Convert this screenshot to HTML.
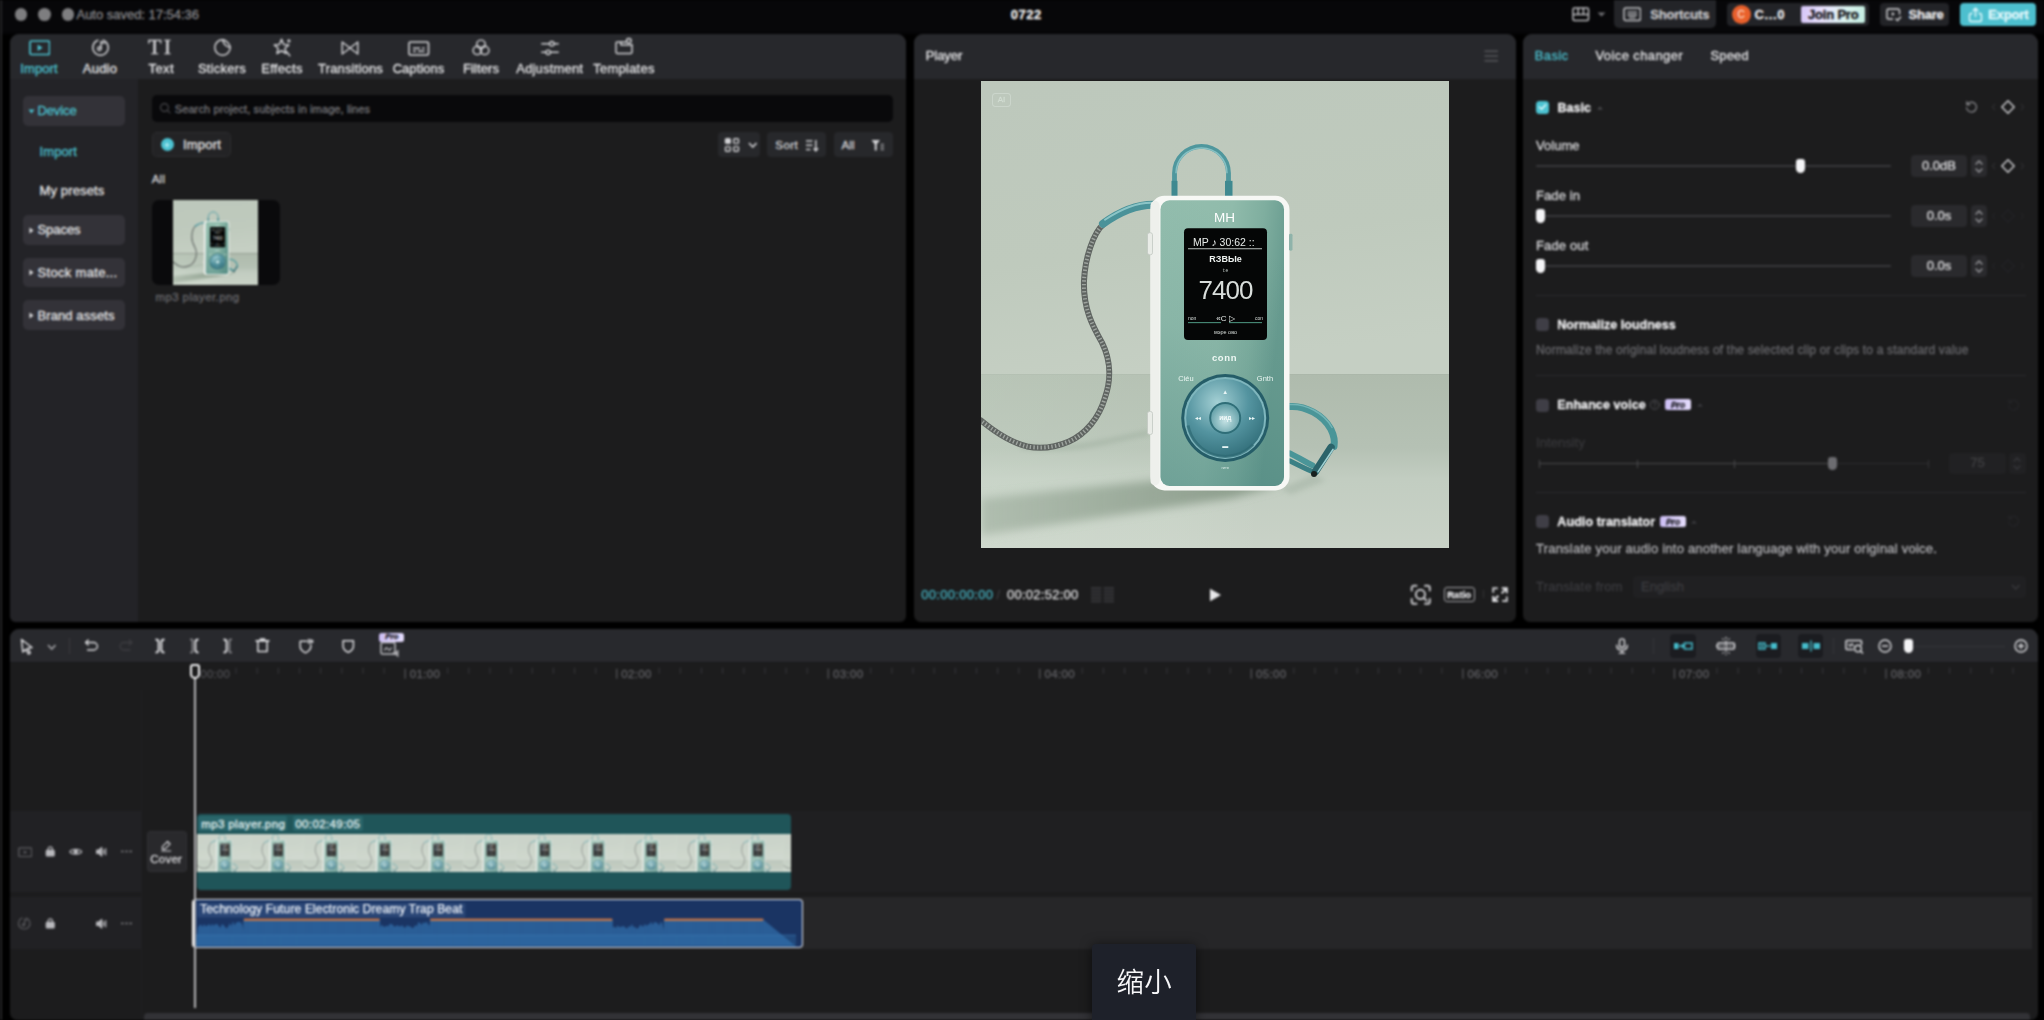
<!DOCTYPE html>
<html><head><meta charset="utf-8"><title>0722</title>
<style>
html,body{margin:0;padding:0;background:#000;}
body{width:2044px;height:1020px;position:relative;overflow:hidden;font-family:"Liberation Sans", sans-serif;}
.t{position:absolute;white-space:nowrap;-webkit-text-stroke-width:0.3px;}
</style></head><body><div id="app" style="position:absolute;left:0;top:0;width:2044px;height:1020px;overflow:hidden;filter:blur(0.8px)">

<svg width="0" height="0" style="position:absolute">
<defs>
<linearGradient id="gWall" x1="0.1" y1="0" x2="0.3" y2="1">
<stop offset="0" stop-color="#bdc8bc"/><stop offset=".6" stop-color="#bfcabd"/><stop offset="1" stop-color="#c5cfc3"/></linearGradient>
<linearGradient id="gFloor" x1="0" y1="0" x2="0" y2="1">
<stop offset="0" stop-color="#afbbad"/><stop offset=".42" stop-color="#b5c1b4"/><stop offset=".6" stop-color="#c2cdc1"/><stop offset="1" stop-color="#c9d2c7"/></linearGradient>
<linearGradient id="gFloorL" x1="0" y1="0" x2="1" y2="0"><stop offset="0" stop-color="#f0fff0" stop-opacity=".15"/><stop offset=".4" stop-color="#f0fff0" stop-opacity=".1"/><stop offset=".6" stop-color="#f0fff0" stop-opacity="0"/></linearGradient>
<linearGradient id="gFace" x1="0" y1="0" x2="1" y2="0.25">
<stop offset="0" stop-color="#94beae"/><stop offset=".55" stop-color="#90bbab"/><stop offset=".8" stop-color="#7fae9f"/><stop offset="1" stop-color="#699c90"/></linearGradient>
<radialGradient id="gWheel" cx=".4" cy=".3" r=".8">
<stop offset="0" stop-color="#a4d0d4"/><stop offset=".5" stop-color="#5494a0"/><stop offset="1" stop-color="#2c6873"/></radialGradient>
<radialGradient id="gBtn" cx=".5" cy=".6" r=".7">
<stop offset="0" stop-color="#c4e2e4"/><stop offset="1" stop-color="#4f929b"/></radialGradient>
<linearGradient id="gShadow" x1="1" y1="0" x2="0" y2="0">
<stop offset="0" stop-color="#7f917f" stop-opacity=".9"/><stop offset="1" stop-color="#93a493" stop-opacity=".5"/></linearGradient>
<filter id="fBlur" x="-10%" y="-30%" width="120%" height="160%"><feGaussianBlur stdDeviation="5"/></filter><filter id="fBlur2" x="-10%" y="-50%" width="120%" height="200%"><feGaussianBlur stdDeviation="2.5"/></filter>
<linearGradient id="gFaceV" x1="0.3" y1="0" x2="0" y2="1"><stop offset="0" stop-color="#2f7070" stop-opacity="0"/><stop offset=".45" stop-color="#2f7070" stop-opacity=".1"/><stop offset="1" stop-color="#2f7070" stop-opacity=".36"/></linearGradient>
<symbol id="mp3" viewBox="0 0 468 468">
<rect width="468" height="294" fill="url(#gWall)"/>
<rect y="293.5" width="468" height="175" fill="url(#gFloor)"/><rect y="293.5" width="468" height="175" fill="url(#gFloorL)"/>
<polygon points="172,400 300,404 250,418 0,455 0,418" fill="url(#gShadow)" filter="url(#fBlur)"/>
<path d="M40,366 C90,372 120,362 168,352" fill="none" stroke="#97a898" stroke-width="5" opacity=".45" filter="url(#fBlur2)"/><polygon points="300,408 332,394 345,400 310,414" fill="#93a494" opacity=".35" filter="url(#fBlur2)"/>
<!-- cable -->
<path id="cab" d="M123,143 C112,152 104,178 103,200 C102,228 112,246 121,262 C130,280 130,300 124,317 C118,338 104,354 88,361 C72,368 56,368 46,366 C30,362 12,350 0,340" fill="none" stroke="#5f6461" stroke-width="6" stroke-linecap="round"/>
<path d="M123,143 C112,152 104,178 103,200 C102,228 112,246 121,262 C130,280 130,300 124,317 C118,338 104,354 88,361 C72,368 56,368 46,366 C30,362 12,350 0,340" fill="none" stroke="#9da39e" stroke-width="4" stroke-dasharray="1.4 2.2"/>
<path d="M172,124 C158,124 140,130 122,143" fill="none" stroke="#4a9299" stroke-width="8" stroke-linecap="round"/>
<path d="M170,122 C158,122 142,127 124,139" fill="none" stroke="#8cc5c7" stroke-width="2" stroke-linecap="round"/>
<!-- top loop -->
<path d="M193.5,116 L193.5,92.5 A27,27 0 0 1 247.5,92.5 L247.5,116" fill="none" stroke="#4f979d" stroke-width="4.8"/>
<path d="M195,92.5 A25.5,25.5 0 0 1 246,92.5" fill="none" stroke="#86c0c3" stroke-width="1.5"/>
<rect x="244" y="100" width="7.5" height="16" fill="#3f8990"/>
<rect x="190.5" y="100" width="6" height="16" fill="#3f8990"/>
<!-- right strap -->
<path d="M309,326 C324,325 342,334 350,349 C353,355 354,360 353,366" fill="none" stroke="#4a9598" stroke-width="7" stroke-linecap="round"/>
<path d="M309,324 C324,323 343,332 351,347" fill="none" stroke="#7dbcbd" stroke-width="1.500" stroke-linecap="round" opacity=".8"/>
<path d="M309,380.500 C316,384 324,388 331,391" fill="none" stroke="#3b8085" stroke-width="5" stroke-linecap="round"/>
<path d="M309,373 C316,376.500 324,381 331.500,385" fill="none" stroke="#4a9598" stroke-width="6" stroke-linecap="round"/>
<path d="M350,367 L334.500,391" fill="none" stroke="#2b636a" stroke-width="7.500" stroke-linecap="round"/>
<path d="M352,369 L337,391.500" fill="none" stroke="#9fd0d2" stroke-width="1.600" stroke-linecap="round"/>
<circle cx="333" cy="393.500" r="3" fill="#18201f"/>
<!-- body -->
<rect x="169.5" y="115" width="139" height="295" rx="14" fill="#f7f8f5"/>
<rect x="169.5" y="120" width="9" height="285" rx="4.500" fill="#eef0ec"/>
<rect x="166.5" y="152" width="5" height="22" rx="2" fill="#e9ece7" stroke="#c2c8c1" stroke-width=".8"/>
<rect x="166.5" y="331" width="5" height="23" rx="2" fill="#e9ece7" stroke="#c2c8c1" stroke-width=".8"/>
<rect x="308" y="153" width="3.500" height="17" rx="1.500" fill="#8fb3aa"/>
<rect x="179.5" y="119.500" width="123.500" height="286" rx="9" fill="url(#gFace)"/><rect x="179.5" y="119.500" width="123.500" height="286" rx="9" fill="url(#gFaceV)"/>
<text x="243.500" y="141" font-family="Liberation Sans, sans-serif" font-size="13.500" fill="#ffffff" text-anchor="middle">MH</text>
<!-- screen -->
<rect x="203" y="147.500" width="83" height="112" rx="4" fill="#050606"/>
<text x="212" y="165" font-family="Liberation Sans, sans-serif" font-size="10.500" fill="#e8ecea">MP ♪ 30:62 ::</text>
<rect x="207" y="167.500" width="74" height="1" fill="#b9c0bd"/>
<text x="244.500" y="181" font-family="Liberation Sans, sans-serif" font-size="9" font-weight="bold" fill="#eef2f0" text-anchor="middle">RЗBЫe</text>
<text x="244.500" y="191" font-family="Liberation Sans, sans-serif" font-size="5" fill="#b9c0bd" text-anchor="middle">t:e</text>
<text x="244.500" y="218" font-family="Liberation Sans, sans-serif" font-size="26" fill="#d9dedb" text-anchor="middle" letter-spacing="-1">7400</text>
<text x="207" y="239" font-family="Liberation Sans, sans-serif" font-size="5" fill="#d8dedb">non</text>
<text x="244.500" y="240" font-family="Liberation Sans, sans-serif" font-size="8" fill="#e8ecea" text-anchor="middle">«C ▷</text>
<text x="282" y="239" font-family="Liberation Sans, sans-serif" font-size="5" fill="#d8dedb" text-anchor="end">con</text>
<rect x="207" y="241.500" width="33" height="1" fill="#4f9a84"/><rect x="248" y="241.500" width="33" height="1" fill="#4f9a84"/>
<text x="244.500" y="253" font-family="Liberation Sans, sans-serif" font-size="5.500" fill="#d8dedb" text-anchor="middle">мэре  ово</text>
<text x="243.500" y="280" font-family="Liberation Sans, sans-serif" font-size="9.500" font-weight="bold" fill="#eef8f4" text-anchor="middle" letter-spacing=".6">conn</text>
<text x="205" y="300" font-family="Liberation Sans, sans-serif" font-size="7.500" fill="#eaf6f2" text-anchor="middle">Ciéu</text>
<text x="284" y="300" font-family="Liberation Sans, sans-serif" font-size="7.500" fill="#eaf6f2" text-anchor="middle">Gnth</text>
<!-- wheel -->
<circle cx="244.200" cy="337.500" r="44" fill="#255d68"/>
<circle cx="244.200" cy="337.500" r="41" fill="#7fb6bd"/>
<circle cx="244.200" cy="337.500" r="39" fill="url(#gWheel)"/>
<path d="M207,345 A38,38 0 0 0 272,364" fill="none" stroke="#2d6a74" stroke-width="3" opacity=".7"/>
<circle cx="244.200" cy="337.500" r="16" fill="#2f6e78"/>
<circle cx="244.200" cy="337.500" r="14" fill="url(#gBtn)"/>
<text x="244.200" y="340" font-family="Liberation Sans, sans-serif" font-size="6.500" font-weight="bold" fill="#f4fbfb" text-anchor="middle">иид</text>
<text x="244.200" y="313" font-family="Liberation Sans, sans-serif" font-size="6" fill="#e6f4f4" text-anchor="middle">▲</text>
<text x="244.200" y="368" font-family="Liberation Sans, sans-serif" font-size="6" fill="#e6f4f4" text-anchor="middle">▬</text>
<text x="217" y="340" font-family="Liberation Sans, sans-serif" font-size="6" fill="#e6f4f4" text-anchor="middle">◂◂</text>
<text x="271.500" y="340" font-family="Liberation Sans, sans-serif" font-size="6" fill="#e6f4f4" text-anchor="middle">▸▸</text>
<text x="244.200" y="388.500" font-family="Liberation Sans, sans-serif" font-size="4" fill="#d3e6e1" text-anchor="middle">rитв</text>
</symbol>
</defs>
</svg>
<div style="position:absolute;left:0px;top:0px;width:2044px;height:36px;background:linear-gradient(#070709 88%,#000);border-radius:0px;"></div>
<div style="position:absolute;left:0px;top:0px;width:2.2px;height:1020px;background:#262628;border-radius:0px;"></div>
<div style="position:absolute;left:14.6px;top:8.299999999999999px;width:12.8px;height:12.8px;border-radius:50%;background:#7e7e80"></div>
<div style="position:absolute;left:38.300000000000004px;top:8.299999999999999px;width:12.8px;height:12.8px;border-radius:50%;background:#7e7e80"></div>
<div style="position:absolute;left:61.6px;top:8.299999999999999px;width:12.8px;height:12.8px;border-radius:50%;background:#7e7e80"></div>
<span id="t1" class="t" style="left:76.5px;top:6.50px;font-size:13px;line-height:16px;color:#8a8a8d;font-weight:400;letter-spacing:-0.019px;">Auto saved: 17:54:36</span>
<span id="t2" class="t" style="left:1026.3px;transform:translateX(-50%);top:6.50px;font-size:13px;line-height:16px;color:#f2f2f2;font-weight:700;letter-spacing:0.520px;">0722</span>
<svg style="position:absolute;left:1572px;top:6.5px;" width="18" height="15" viewBox="0 0 18 15"><rect x="1" y="1" width="15.500" height="12.500" rx="1.5" fill="none" stroke="#bdbdc0" stroke-width="1.5"/><path d="M1 7.500H16.500M6.200 1V7.500M11.400 1V7.500" stroke="#bdbdc0" stroke-width="1.5" fill="none"/></svg>
<svg style="position:absolute;left:1596.5px;top:12px;" width="9" height="5" viewBox="0 0 9 5"><path d="M0.500 0.500L4.500 4.500L8.500 0.500Z" fill="#6e6e72"/></svg>
<div style="position:absolute;left:1614px;top:-4px;width:102px;height:32px;background:#232428;border-radius:5px;"></div>
<svg style="position:absolute;left:1622.5px;top:7px;" width="18.5" height="14.5" viewBox="0 0 18.5 14.5"><rect x="1" y="1" width="16.500" height="12.500" rx="2" fill="none" stroke="#c2c2c5" stroke-width="1.5"/><path d="M4.500 5.200H14M4.500 8H14M6 10.700H12.500" stroke="#c2c2c5" stroke-width="1.3" fill="none"/></svg>
<span id="t3" class="t" style="left:1650.2px;top:6.50px;font-size:13px;line-height:16px;color:#c6c6c9;font-weight:700;letter-spacing:-0.186px;">Shortcuts</span>
<div style="position:absolute;left:1727px;top:3px;width:142px;height:22.5px;background:#222327;border-radius:4px;"></div>
<div style="position:absolute;left:1731.500px;top:5px;width:19px;height:19px;border-radius:50%;background:#e9602b"></div>
<span id="t4" class="t" style="left:1741px;transform:translateX(-50%);top:8.50px;font-size:10px;line-height:12px;color:#ffd9c8;font-weight:400;">C</span>
<span id="t5" class="t" style="left:1754.5px;top:6.50px;font-size:13px;line-height:16px;color:#ececee;font-weight:700;letter-spacing:0.606px;">C...0</span>
<div style="position:absolute;left:1801px;top:6px;width:64px;height:17px;background:linear-gradient(100deg,#d4c3f6 0%,#e9e2fd 35%,#d9f3ee 70%,#c3ecdf 100%);border-radius:2px;"></div>
<span id="t6" class="t" style="left:1808px;top:6.50px;font-size:13px;line-height:16px;color:#101014;font-weight:700;letter-spacing:-0.189px;">Join Pro</span>
<div style="position:absolute;left:1880px;top:3px;width:69px;height:22.5px;background:#222327;border-radius:4px;"></div>
<svg style="position:absolute;left:1886px;top:7.5px;" width="16" height="14" viewBox="0 0 16 14"><path d="M13.500 6.500V2.500A1.500 1.500 0 0 0 12 1H2.500A1.500 1.500 0 0 0 1 2.500V9.500A1.500 1.500 0 0 0 2.500 11H7" fill="none" stroke="#d8d8da" stroke-width="1.4"/><path d="M5.800 4L8.800 6L5.800 8Z" fill="#d8d8da"/><path d="M9.500 10.500L11.500 12.500L15 8.800" fill="none" stroke="#d8d8da" stroke-width="1.4"/></svg>
<span id="t7" class="t" style="left:1908.5px;top:6.50px;font-size:13px;line-height:16px;color:#ececee;font-weight:700;letter-spacing:-0.228px;">Share</span>
<div style="position:absolute;left:1960px;top:3px;width:75.5px;height:23px;background:#4dbfce;border-radius:4px;"></div>
<svg style="position:absolute;left:1967.5px;top:6.5px;" width="15" height="16" viewBox="0 0 15 16"><path d="M4.500 6.500H3A1.500 1.500 0 0 0 1.500 8V13A1.500 1.500 0 0 0 3 14.500H12A1.500 1.500 0 0 0 13.500 13V8A1.500 1.500 0 0 0 12 6.500H10.500" fill="none" stroke="#e9fbff" stroke-width="1.4"/><path d="M7.500 10V1.500M4.800 4L7.500 1.300L10.200 4" fill="none" stroke="#e9fbff" stroke-width="1.4"/></svg>
<span id="t8" class="t" style="left:1988px;top:6.50px;font-size:13px;line-height:16px;color:#e4f9fd;font-weight:700;letter-spacing:-0.112px;">Export</span>
<div style="position:absolute;left:10px;top:33.500px;width:896px;height:588.800px;border-radius:9px 9px 6px 6px;overflow:hidden;background:#1c1c1d"><div style="position:absolute;left:0;top:0;width:896px;height:45.200px;background:#27282c"></div><div style="position:absolute;left:0;top:45.200px;width:127.500px;height:545px;background:#232327"></div></div>
<svg style="position:absolute;left:28.5px;top:40px;" width="21.5" height="15.5" viewBox="0 0 21.5 15.5"><rect x="1" y="1" width="19.500" height="13.500" rx="1.5" fill="none" stroke="#4cc2d1" stroke-width="1.7"/><path d="M8.600 4.600L13.600 7.750L8.600 10.900Z" fill="#4cc2d1"/></svg>
<svg style="position:absolute;left:89.50px;top:37.10px;" width="21" height="21" viewBox="0 0 24 24" fill="none" stroke="#d2d2d5" stroke-width="1.7" stroke-linecap="round" stroke-linejoin="round"><path d="M9 3.700A8.800 8.800 0 1 0 15 3.700" /><path d="M12.600 13.200V5.200L16.300 7.200"/><circle cx="10.700" cy="13.400" r="1.900"/></svg>
<span id="t9" class="t" style="left:160.7px;transform:translateX(-50%);top:34.30px;font-size:22px;line-height:26px;color:#d2d2d5;font-weight:400;letter-spacing:2.367px;font-family:'Liberation Serif', serif;-webkit-text-stroke:0.4px #d2d2d5;">TI</span>
<svg style="position:absolute;left:211.50px;top:37.10px;" width="21" height="21" viewBox="0 0 24 24" fill="none" stroke="#d2d2d5" stroke-width="1.7" stroke-linecap="round" stroke-linejoin="round"><path d="M12.500 3.200A8.800 8.800 0 1 0 20.800 11.500C16.500 11.500 12.500 8 12.500 3.200Z"/><path d="M12.500 3.200C15.500 3.500 20.300 7.600 20.800 11.500"/></svg>
<svg style="position:absolute;left:271.00px;top:36.60px;" width="22" height="22" viewBox="0 0 24 24" fill="none" stroke="#d2d2d5" stroke-width="1.6" stroke-linecap="round" stroke-linejoin="round"><path d="M11.500 2.500L13.800 8.200L19.500 8.600L15.200 12.300L16.500 18L11.500 15L6.500 18L7.800 12.300L3.500 8.600L9.200 8.200Z"/><path d="M17.200 16.200L20.500 20.500M19.500 3V5.500M18.250 4.250H20.750"/></svg>
<svg style="position:absolute;left:339.00px;top:36.60px;" width="22" height="22" viewBox="0 0 24 24" fill="none" stroke="#d2d2d5" stroke-width="1.6" stroke-linecap="round" stroke-linejoin="round"><path d="M3.500 5.500L12 12L3.500 18.500Z"/><path d="M20.500 5.500L12 12L20.500 18.500Z"/></svg>
<svg style="position:absolute;left:408px;top:40.5px;" width="21.5" height="15" viewBox="0 0 21.5 15"><rect x="1" y="1" width="19.500" height="13" rx="1.5" fill="none" stroke="#d2d2d5" stroke-width="1.6"/><path d="M5 7.300H12M14 7.300H16.500M5 10.300H8M10 10.300H16.500" stroke="#d2d2d5" stroke-width="1.4" fill="none"/></svg>
<svg style="position:absolute;left:470.00px;top:36.60px;" width="22" height="22" viewBox="0 0 24 24" fill="none" stroke="#d2d2d5" stroke-width="1.6" stroke-linecap="round" stroke-linejoin="round"><circle cx="12" cy="8" r="4.600"/><circle cx="8" cy="14.600" r="4.600"/><circle cx="16" cy="14.600" r="4.600"/></svg>
<svg style="position:absolute;left:538.50px;top:36.60px;" width="22" height="22" viewBox="0 0 24 24" fill="none" stroke="#d2d2d5" stroke-width="1.5" stroke-linecap="round" stroke-linejoin="round"><path d="M3 7.300H11.500M16.500 7.300H21M3 16.700H7.500M12.500 16.700H21"/><circle cx="14" cy="7.300" r="2.400"/><circle cx="10" cy="16.700" r="2.400"/></svg>
<svg style="position:absolute;left:613.00px;top:36.20px;" width="22" height="22" viewBox="0 0 24 24" fill="none" stroke="#d2d2d5" stroke-width="1.6" stroke-linecap="round" stroke-linejoin="round"><path d="M14 6.500H4.500A1.200 1.200 0 0 0 3.300 7.700V17.800A1.200 1.200 0 0 0 4.500 19H19.500A1.200 1.200 0 0 0 20.700 17.800V9.500"/><path d="M8.500 6.500V9.800H20.700"/><circle cx="17.300" cy="5.200" r="2.500"/></svg>
<span id="t10" class="t" style="left:39px;transform:translateX(-50%);top:60.60px;font-size:13px;line-height:16px;color:#4cc2d1;font-weight:400;letter-spacing:0.143px;-webkit-text-stroke:0.3px #4cc2d1;">Import</span>
<span id="t11" class="t" style="left:100px;transform:translateX(-50%);top:60.60px;font-size:13px;line-height:16px;color:#e6e6e8;font-weight:400;letter-spacing:0.210px;-webkit-text-stroke:0.3px #e6e6e8;">Audio</span>
<span id="t12" class="t" style="left:161.3px;transform:translateX(-50%);top:60.60px;font-size:13px;line-height:16px;color:#e6e6e8;font-weight:400;letter-spacing:0.464px;-webkit-text-stroke:0.3px #e6e6e8;">Text</span>
<span id="t13" class="t" style="left:222px;transform:translateX(-50%);top:60.60px;font-size:13px;line-height:16px;color:#e6e6e8;font-weight:400;letter-spacing:0.246px;-webkit-text-stroke:0.3px #e6e6e8;">Stickers</span>
<span id="t14" class="t" style="left:282px;transform:translateX(-50%);top:60.60px;font-size:13px;line-height:16px;color:#e6e6e8;font-weight:400;letter-spacing:0.298px;-webkit-text-stroke:0.3px #e6e6e8;">Effects</span>
<span id="t15" class="t" style="left:350.5px;transform:translateX(-50%);top:60.60px;font-size:13px;line-height:16px;color:#e6e6e8;font-weight:400;letter-spacing:0.172px;-webkit-text-stroke:0.3px #e6e6e8;">Transitions</span>
<span id="t16" class="t" style="left:418.5px;transform:translateX(-50%);top:60.60px;font-size:13px;line-height:16px;color:#e6e6e8;font-weight:400;letter-spacing:0.048px;-webkit-text-stroke:0.3px #e6e6e8;">Captions</span>
<span id="t17" class="t" style="left:481px;transform:translateX(-50%);top:60.60px;font-size:13px;line-height:16px;color:#e6e6e8;font-weight:400;letter-spacing:0.087px;-webkit-text-stroke:0.3px #e6e6e8;">Filters</span>
<span id="t18" class="t" style="left:549.7px;transform:translateX(-50%);top:60.60px;font-size:13px;line-height:16px;color:#e6e6e8;font-weight:400;letter-spacing:0.175px;-webkit-text-stroke:0.3px #e6e6e8;">Adjustment</span>
<span id="t19" class="t" style="left:624px;transform:translateX(-50%);top:60.60px;font-size:13px;line-height:16px;color:#e6e6e8;font-weight:400;letter-spacing:0.228px;-webkit-text-stroke:0.3px #e6e6e8;">Templates</span>
<div style="position:absolute;left:22.5px;top:96px;width:102.5px;height:29.5px;background:#333238;border-radius:5px;"></div>
<svg style="position:absolute;left:27.5px;top:108.5px;" width="7" height="5" viewBox="0 0 7 5"><path d="M0.500 0.500H6.500L3.500 4.500Z" fill="#4cc2d1"/></svg>
<span id="t20" class="t" style="left:37.5px;top:103.40px;font-size:13px;line-height:16px;color:#4cc2d1;font-weight:400;letter-spacing:-0.125px;-webkit-text-stroke:0.3px #4cc2d1;">Device</span>
<span id="t21" class="t" style="left:39.5px;top:143.70px;font-size:13px;line-height:16px;color:#4cc2d1;font-weight:400;letter-spacing:0.109px;">Import</span>
<span id="t22" class="t" style="left:39.5px;top:182.90px;font-size:13px;line-height:16px;color:#e6e6e8;font-weight:400;letter-spacing:0.142px;">My presets</span>
<div style="position:absolute;left:22.5px;top:215px;width:102.5px;height:29.7px;background:#333238;border-radius:5px;"></div>
<svg style="position:absolute;left:28.5px;top:226.5px;" width="5" height="7" viewBox="0 0 5 7"><path d="M0.500 0.500V6.500L4.500 3.500Z" fill="#e0e0e2"/></svg>
<span id="t23" class="t" style="left:37.5px;top:222.20px;font-size:13px;line-height:16px;color:#e6e6e8;font-weight:400;letter-spacing:-0.062px;-webkit-text-stroke:0.3px #e6e6e8;">Spaces</span>
<div style="position:absolute;left:22.5px;top:257.7px;width:102.5px;height:29.7px;background:#333238;border-radius:5px;"></div>
<svg style="position:absolute;left:28.5px;top:269.2px;" width="5" height="7" viewBox="0 0 5 7"><path d="M0.500 0.500V6.500L4.500 3.500Z" fill="#e0e0e2"/></svg>
<span id="t24" class="t" style="left:37.5px;top:264.90px;font-size:13px;line-height:16px;color:#e6e6e8;font-weight:400;letter-spacing:0.317px;-webkit-text-stroke:0.3px #e6e6e8;">Stock mate...</span>
<div style="position:absolute;left:22.5px;top:300.3px;width:102.5px;height:29.7px;background:#333238;border-radius:5px;"></div>
<svg style="position:absolute;left:28.5px;top:311.8px;" width="5" height="7" viewBox="0 0 5 7"><path d="M0.500 0.500V6.500L4.500 3.500Z" fill="#e0e0e2"/></svg>
<span id="t25" class="t" style="left:37.5px;top:307.50px;font-size:13px;line-height:16px;color:#e6e6e8;font-weight:400;letter-spacing:0.094px;-webkit-text-stroke:0.3px #e6e6e8;">Brand assets</span>
<div style="position:absolute;left:151.7px;top:95px;width:741px;height:26.8px;background:#09090b;border-radius:5px;"></div>
<svg style="position:absolute;left:159.05px;top:102.35px;" width="12.5" height="12.5" viewBox="0 0 24 24" fill="none" stroke="#4a4a4e" stroke-width="2.2" stroke-linecap="round" stroke-linejoin="round"><circle cx="10.500" cy="10.500" r="7.500"/><path d="M16 16L21 21"/></svg>
<span id="t26" class="t" style="left:174.7px;top:102.90px;font-size:11px;line-height:13px;color:#77777b;font-weight:400;letter-spacing:0.118px;">Search project, subjects in image, lines</span>
<div style="position:absolute;left:151.700px;top:131.700px;width:79px;height:25px;border-radius:5px;background:#232325;border:1px dotted #38383b;box-sizing:border-box"></div>
<div style="position:absolute;left:160.800px;top:138px;width:13px;height:13px;border-radius:50%;background:#4cc2d1"></div>
<svg style="position:absolute;left:164.3px;top:141.5px;" width="6" height="6" viewBox="0 0 6 6"><path d="M3 0.500V5.500M0.500 3H5.500" stroke="#bff2f8" stroke-width="1.2" fill="none"/></svg>
<span id="t27" class="t" style="left:183px;top:136.50px;font-size:13px;line-height:16px;color:#e6e6e8;font-weight:400;letter-spacing:0.193px;">Import</span>
<div style="position:absolute;left:718.2px;top:132px;width:42px;height:25px;background:#27282b;border-radius:4px;"></div>
<svg style="position:absolute;left:724px;top:137.5px;" width="16" height="14" viewBox="0 0 16 14"><g fill="none" stroke="#d0d0d3" stroke-width="1.4"><rect x="1.500" y="0.800" width="4.800" height="4.600" rx="1" fill="#d0d0d3"/><rect x="9.700" y="0.800" width="4.800" height="4.600" rx="1"/><rect x="1.500" y="8.600" width="4.800" height="4.600" rx="1"/><rect x="9.700" y="8.600" width="4.800" height="4.600" rx="1"/></g></svg>
<svg style="position:absolute;left:747.5px;top:141.5px;" width="9.5" height="6.5" viewBox="0 0 9.5 6.5"><path d="M1 1L4.750 5L8.500 1" fill="none" stroke="#d0d0d3" stroke-width="1.6"/></svg>
<div style="position:absolute;left:767px;top:132px;width:59px;height:25px;background:#27282b;border-radius:4px;"></div>
<span id="t28" class="t" style="left:775.3px;top:137.70px;font-size:11.5px;line-height:14px;color:#d6d6d9;font-weight:400;letter-spacing:0.477px;">Sort</span>
<svg style="position:absolute;left:805px;top:138.5px;" width="14" height="13" viewBox="0 0 14 13"><path d="M1 2H7.500M1 6.300H7.500M1 10.600H5.500" stroke="#d0d0d3" stroke-width="1.5" fill="none"/><path d="M10.800 1V11.500M8.500 9.300L10.800 11.800L13.100 9.300" stroke="#d0d0d3" stroke-width="1.5" fill="none"/></svg>
<div style="position:absolute;left:833.6px;top:132px;width:59.2px;height:25px;background:#27282b;border-radius:4px;"></div>
<span id="t29" class="t" style="left:841.4px;top:137.70px;font-size:11.5px;line-height:14px;color:#d6d6d9;font-weight:400;letter-spacing:0.240px;">All</span>
<svg style="position:absolute;left:871px;top:138.5px;" width="14" height="13" viewBox="0 0 14 13"><path d="M0.500 1H9L5.800 5.200V11.500H3.700V5.200Z" fill="#d0d0d3"/><path d="M9.500 5.500H13M9.500 8H13M9.500 10.500H13" stroke="#8a8a8e" stroke-width="1.3" fill="none"/></svg>
<span id="t30" class="t" style="left:151.7px;top:171.80px;font-size:11.5px;line-height:14px;color:#d6d6d9;font-weight:400;letter-spacing:0.240px;">All</span>
<div style="position:absolute;left:151.7px;top:199.8px;width:128px;height:85.4px;background:#0a0a0c;border-radius:7px;"></div>
<svg style="position:absolute;left:172.800px;top:199.800px" width="85.400" height="85.400" viewBox="0 0 468 468"><use href="#mp3"/></svg>
<span id="t31" class="t" style="left:155.5px;top:290.00px;font-size:11.5px;line-height:14px;color:#6a6a6e;font-weight:400;letter-spacing:0.383px;">mp3 player.png</span>
<div style="position:absolute;left:913.600px;top:33.500px;width:602.200px;height:588.800px;border-radius:9px 9px 7px 7px;overflow:hidden;background:#1c1c1d"><div style="position:absolute;left:0;top:0;width:603px;height:45.200px;background:#27282c"></div></div>
<span id="t32" class="t" style="left:925.7px;top:47.70px;font-size:13px;line-height:16px;color:#e6e6e8;font-weight:400;letter-spacing:-0.060px;-webkit-text-stroke:0.3px #e6e6e8;">Player</span>
<svg style="position:absolute;left:1484px;top:50px;" width="14.5" height="12" viewBox="0 0 14.5 12"><path d="M0.500 1.200H14M0.500 6H14M0.500 10.800H14" stroke="#56565a" stroke-width="1.5" fill="none"/></svg>
<span id="t34" class="t" style="left:921.3px;top:586.60px;font-size:13px;line-height:16px;color:#46b4c4;font-weight:400;letter-spacing:0.301px;-webkit-text-stroke:0.25px #46b4c4;">00:00:00:00</span>
<span id="t35" class="t" style="left:996.5px;top:586.60px;font-size:13px;line-height:16px;color:#3a3a3e;font-weight:400;">/</span>
<span id="t36" class="t" style="left:1007px;top:586.60px;font-size:13px;line-height:16px;color:#e2e2e4;font-weight:400;letter-spacing:0.256px;-webkit-text-stroke:0.25px #e2e2e4;">00:02:52:00</span>
<svg style="position:absolute;left:1090.7px;top:586.5px;" width="23.2" height="16.5" viewBox="0 0 23.2 16.5"><rect x="0" y="0.0" width="10.400" height="2.300" fill="#333336"/><rect x="0" y="3.3" width="10.400" height="2.300" fill="#333336"/><rect x="0" y="6.6" width="10.400" height="2.300" fill="#333336"/><rect x="0" y="9.899999999999999" width="10.400" height="2.300" fill="#333336"/><rect x="0" y="13.2" width="10.400" height="2.300" fill="#333336"/><rect x="12.6" y="0.0" width="10.400" height="2.300" fill="#333336"/><rect x="12.6" y="3.3" width="10.400" height="2.300" fill="#333336"/><rect x="12.6" y="6.6" width="10.400" height="2.300" fill="#333336"/><rect x="12.6" y="9.899999999999999" width="10.400" height="2.300" fill="#333336"/><rect x="12.6" y="13.2" width="10.400" height="2.300" fill="#333336"/></svg>
<svg style="position:absolute;left:1209px;top:587.5px;" width="13" height="14" viewBox="0 0 13 14"><path d="M1 0.800L12 7L1 13.200Z" fill="#e8e8ea"/></svg>
<svg style="position:absolute;left:1407.85px;top:581.85px;" width="25.5" height="25.5" viewBox="0 0 24 24" fill="none" stroke="#c4c4c7" stroke-width="1.9" stroke-linecap="round" stroke-linejoin="round"><path d="M3.500 8V5.500A2 2 0 0 1 5.500 3.500H8M16 3.500H18.500A2 2 0 0 1 20.500 5.500V8M20.500 16V18.500A2 2 0 0 1 18.500 20.500H16M8 20.500H5.500A2 2 0 0 1 3.500 18.500V16"/><circle cx="11.700" cy="11.700" r="4.300"/><path d="M15 15L17.500 17.500"/></svg>
<div style="position:absolute;left:1443.500px;top:587px;width:31.500px;height:15px;border:1.800px solid #a4a4a8;border-radius:3px;box-sizing:border-box"></div>
<span id="t37" class="t" style="left:1459.2px;transform:translateX(-50%);top:589.20px;font-size:9.5px;line-height:11px;color:#e4e4e7;font-weight:700;letter-spacing:0.050px;">Ratio</span>
<div style="position:absolute;left:1482.7px;top:590px;width:1px;height:8px;background:#333336;border-radius:0px;"></div>
<svg style="position:absolute;left:1491.7px;top:587px;" width="16" height="15.2" viewBox="0 0 16 15.2"><path d="M1.200 5.800V1.200H5.800M14.800 9.400V14H10.200" fill="none" stroke="#c4c4c7" stroke-width="2"/><path d="M9.800 1.200H14.800V6.200M14.600 1.400L9.600 6.400M6.200 14H1.200V9M1.400 13.800L6.400 8.800" fill="none" stroke="#e0e0e3" stroke-width="2"/></svg>
<div style="position:absolute;left:1523px;top:33.500px;width:514.500px;height:588.800px;border-radius:9px 9px 7px 7px;overflow:hidden;background:#1c1c1d"><div style="position:absolute;left:0;top:0;width:514.500px;height:45.200px;background:#27282c"></div></div>
<span id="t38" class="t" style="left:1534.8px;top:47.80px;font-size:13px;line-height:16px;color:#4cc2d1;font-weight:400;letter-spacing:0.341px;-webkit-text-stroke:0.3px #4cc2d1;">Basic</span>
<span id="t39" class="t" style="left:1595.5px;top:47.80px;font-size:13px;line-height:16px;color:#e6e6e8;font-weight:400;letter-spacing:0.392px;-webkit-text-stroke:0.3px #e6e6e8;">Voice changer</span>
<span id="t40" class="t" style="left:1710.4px;top:47.80px;font-size:13px;line-height:16px;color:#e6e6e8;font-weight:400;letter-spacing:0.181px;-webkit-text-stroke:0.3px #e6e6e8;">Speed</span>
<div style="position:absolute;left:1535.8px;top:100.8px;width:13px;height:13px;background:#4cc2d1;border-radius:3.5px;"></div>
<svg style="position:absolute;left:1537.8px;top:103.3px;" width="9" height="8" viewBox="0 0 9 8"><path d="M1.300 4L3.600 6.300L7.700 1.700" fill="none" stroke="#e9fbff" stroke-width="1.5" stroke-linecap="round" stroke-linejoin="round"/></svg>
<span id="t41" class="t" style="left:1557.4px;top:100.50px;font-size:12.5px;line-height:15px;color:#f0f0f2;font-weight:700;letter-spacing:0.028px;">Basic</span>
<svg style="position:absolute;left:1596.5px;top:105.5px;" width="6" height="4" viewBox="0 0 6 4"><path d="M0 3.500L3 0.500L6 3.500Z" fill="#4a4a4e"/></svg>
<svg style="position:absolute;left:1963.90px;top:99.50px;" width="15" height="15" viewBox="0 0 24 24" fill="none" stroke="#8b8b8f" stroke-width="1.9" stroke-linecap="round" stroke-linejoin="round"><path d="M5.200 7A8 8 0 1 1 4 12"/><path d="M4.500 2.500V7.500H9.500"/></svg>
<svg style="position:absolute;left:1991.4px;top:99.3px;" width="34" height="16" viewBox="0 0 34 16"><path d="M17 1.800L23.200 8L17 14.200L10.800 8Z" fill="none" stroke="#d2d2d5" stroke-width="1.4" stroke-linejoin="round"/><path d="M4 5L1.500 8L4 11M30 5L32.500 8L30 11" fill="none" stroke="#2c2c2f" stroke-width="1.3"/></svg>
<span id="t42" class="t" style="left:1536px;top:137.50px;font-size:13px;line-height:16px;color:#dadadd;font-weight:400;letter-spacing:0.021px;">Volume</span>
<div style="position:absolute;left:1536px;top:165.2px;width:355px;height:1.6px;background:#38383b;border-radius:1px;"></div>
<div style="position:absolute;left:1796.0px;top:159.2px;width:9px;height:13.600px;background:#f4f4f6;border-radius:3px 3px 4.500px 4.500px"></div>
<div style="position:absolute;left:1910.8px;top:154.7px;width:56.5px;height:22.6px;background:#2a2a2d;border-radius:4px;"></div>
<span id="t43" class="t" style="left:1939px;transform:translateX(-50%);top:158.00px;font-size:13px;line-height:16px;color:#e8e8ea;font-weight:400;-webkit-text-stroke:0.2px #e8e8ea;">0.0dB</span>
<div style="position:absolute;left:1970.7px;top:154.7px;width:16px;height:22.6px;background:#2a2a2d;border-radius:4px;"></div>
<svg style="position:absolute;left:1974.7px;top:158.5px;" width="8" height="15" viewBox="0 0 8 15"><path d="M1 5L4 2L7 5M1 10L4 13L7 10" fill="none" stroke="#9a9a9e" stroke-width="1.4" stroke-linecap="round" stroke-linejoin="round"/></svg>
<svg style="position:absolute;left:1991.4px;top:158px;" width="34" height="16" viewBox="0 0 34 16"><path d="M17 1.800L23.200 8L17 14.200L10.800 8Z" fill="none" stroke="#d2d2d5" stroke-width="1.4" stroke-linejoin="round"/><path d="M4 5L1.500 8L4 11M30 5L32.500 8L30 11" fill="none" stroke="#2c2c2f" stroke-width="1.3"/></svg>
<span id="t44" class="t" style="left:1536px;top:187.50px;font-size:13px;line-height:16px;color:#dadadd;font-weight:400;letter-spacing:0.089px;">Fade in</span>
<div style="position:absolute;left:1536px;top:215.2px;width:355px;height:1.6px;background:#38383b;border-radius:1px;"></div>
<div style="position:absolute;left:1536.0px;top:209.2px;width:9px;height:13.600px;background:#f4f4f6;border-radius:3px 3px 4.500px 4.500px"></div>
<div style="position:absolute;left:1910.8px;top:204.7px;width:56.5px;height:22.6px;background:#2a2a2d;border-radius:4px;"></div>
<span id="t45" class="t" style="left:1939px;transform:translateX(-50%);top:208.00px;font-size:13px;line-height:16px;color:#e8e8ea;font-weight:400;-webkit-text-stroke:0.2px #e8e8ea;">0.0s</span>
<div style="position:absolute;left:1970.7px;top:204.7px;width:16px;height:22.6px;background:#2a2a2d;border-radius:4px;"></div>
<svg style="position:absolute;left:1974.7px;top:208.5px;" width="8" height="15" viewBox="0 0 8 15"><path d="M1 5L4 2L7 5M1 10L4 13L7 10" fill="none" stroke="#9a9a9e" stroke-width="1.4" stroke-linecap="round" stroke-linejoin="round"/></svg>
<svg style="position:absolute;left:1991.4px;top:208px;" width="34" height="16" viewBox="0 0 34 16"><path d="M17 1.800L23.200 8L17 14.200L10.800 8Z" fill="none" stroke="#232326" stroke-width="1.4" stroke-linejoin="round"/><path d="M4 5L1.500 8L4 11M30 5L32.500 8L30 11" fill="none" stroke="#232326" stroke-width="1.3"/></svg>
<span id="t46" class="t" style="left:1536px;top:237.50px;font-size:13px;line-height:16px;color:#dadadd;font-weight:400;letter-spacing:0.146px;">Fade out</span>
<div style="position:absolute;left:1536px;top:265.2px;width:355px;height:1.6px;background:#38383b;border-radius:1px;"></div>
<div style="position:absolute;left:1536.0px;top:259.2px;width:9px;height:13.600px;background:#f4f4f6;border-radius:3px 3px 4.500px 4.500px"></div>
<div style="position:absolute;left:1910.8px;top:254.7px;width:56.5px;height:22.6px;background:#2a2a2d;border-radius:4px;"></div>
<span id="t47" class="t" style="left:1939px;transform:translateX(-50%);top:258.00px;font-size:13px;line-height:16px;color:#e8e8ea;font-weight:400;-webkit-text-stroke:0.2px #e8e8ea;">0.0s</span>
<div style="position:absolute;left:1970.7px;top:254.7px;width:16px;height:22.6px;background:#2a2a2d;border-radius:4px;"></div>
<svg style="position:absolute;left:1974.7px;top:258.5px;" width="8" height="15" viewBox="0 0 8 15"><path d="M1 5L4 2L7 5M1 10L4 13L7 10" fill="none" stroke="#9a9a9e" stroke-width="1.4" stroke-linecap="round" stroke-linejoin="round"/></svg>
<svg style="position:absolute;left:1991.4px;top:258px;" width="34" height="16" viewBox="0 0 34 16"><path d="M17 1.800L23.200 8L17 14.200L10.800 8Z" fill="none" stroke="#232326" stroke-width="1.4" stroke-linejoin="round"/><path d="M4 5L1.500 8L4 11M30 5L32.500 8L30 11" fill="none" stroke="#232326" stroke-width="1.3"/></svg>
<div style="position:absolute;left:1536px;top:294.7px;width:489.5px;height:1px;background:#2a2a2d;border-radius:0px;"></div>
<div style="position:absolute;left:1535.8px;top:318.2px;width:13px;height:13px;background:#3f3e46;border-radius:3.5px;"></div>
<span id="t48" class="t" style="left:1557.3px;top:317.90px;font-size:12.5px;line-height:15px;color:#f0f0f2;font-weight:700;letter-spacing:0.023px;">Normalize loudness</span>
<span id="t49" class="t" style="left:1536px;top:343.00px;font-size:12px;line-height:14px;color:#68686c;font-weight:400;letter-spacing:0.193px;">Normalize the original loudness of the selected clip or clips to a standard value</span>
<div style="position:absolute;left:1536px;top:375.3px;width:489.5px;height:1px;background:#2a2a2d;border-radius:0px;"></div>
<div style="position:absolute;left:1535.8px;top:398.5px;width:13px;height:13px;background:#3f3e46;border-radius:3.5px;"></div>
<span id="t50" class="t" style="left:1557.3px;top:398.10px;font-size:12.5px;line-height:15px;color:#f0f0f2;font-weight:700;letter-spacing:0.073px;">Enhance voice</span>
<svg style="position:absolute;left:1649.25px;top:399.45px;" width="11.5" height="11.5" viewBox="0 0 24 24" fill="none" stroke="#55555a" stroke-width="1.8" stroke-linecap="round" stroke-linejoin="round"><circle cx="12" cy="12" r="9.500"/><path d="M12 17V16.500M12 13.500C12 11 15 11 15 9A3 3 0 0 0 9 9"/></svg>
<div style="position:absolute;left:1665px;top:399.1px;width:26px;height:11.4px;background:linear-gradient(100deg,#cbbcf4,#e6defc);border-radius:2.5px;"></div>
<span id="t51" class="t" style="left:1678px;transform:translateX(-50%);top:400.00px;font-size:8.5px;line-height:10px;color:#15151a;font-weight:700;font-style:italic;">Pro</span>
<svg style="position:absolute;left:1696.5px;top:403.3px;" width="6" height="4" viewBox="0 0 6 4"><path d="M0 3.500L3 0.500L6 3.500Z" fill="#3c3c40"/></svg>
<svg style="position:absolute;left:2005.80px;top:397.50px;" width="15" height="15" viewBox="0 0 24 24" fill="none" stroke="#252528" stroke-width="1.9" stroke-linecap="round" stroke-linejoin="round"><path d="M5.200 7A8 8 0 1 1 4 12"/><path d="M4.500 2.500V7.500H9.500"/></svg>
<span id="t52" class="t" style="left:1536px;top:435.30px;font-size:13px;line-height:16px;color:#37373a;font-weight:400;letter-spacing:0.064px;">Intensity</span>
<div style="position:absolute;left:1539.3px;top:462.6px;width:293px;height:1.5px;background:#48484b;border-radius:0px;"></div>
<div style="position:absolute;left:1832.3px;top:462.6px;width:96.7px;height:1.5px;background:#2c2c2f;border-radius:0px;"></div>
<div style="position:absolute;left:1538.7px;top:459.5px;width:1.3px;height:8px;background:#48484b;border-radius:0px;"></div>
<div style="position:absolute;left:1636.7px;top:459.5px;width:1.3px;height:8px;background:#48484b;border-radius:0px;"></div>
<div style="position:absolute;left:1734.2px;top:459.5px;width:1.3px;height:8px;background:#48484b;border-radius:0px;"></div>
<div style="position:absolute;left:1928.1000000000001px;top:459.5px;width:1.3px;height:8px;background:#343437;border-radius:0px;"></div>
<div style="position:absolute;left:1828px;top:456.500px;width:8.600px;height:13.400px;background:#6c6c70;border-radius:3px 3px 4.300px 4.300px"></div>
<div style="position:absolute;left:1949px;top:452.7px;width:56.7px;height:21.5px;background:#212123;border-radius:4px;"></div>
<span id="t53" class="t" style="left:1977.5px;transform:translateX(-50%);top:455.40px;font-size:13px;line-height:16px;color:#404043;font-weight:400;">75</span>
<div style="position:absolute;left:2009px;top:452.65px;width:16.7px;height:21.5px;background:#212123;border-radius:4px;"></div>
<svg style="position:absolute;left:2013.35px;top:455.9px;" width="8" height="15" viewBox="0 0 8 15"><path d="M1 5L4 2L7 5M1 10L4 13L7 10" fill="none" stroke="#38383b" stroke-width="1.4" stroke-linecap="round" stroke-linejoin="round"/></svg>
<div style="position:absolute;left:1536px;top:492px;width:489.5px;height:1px;background:#2a2a2d;border-radius:0px;"></div>
<div style="position:absolute;left:1535.8px;top:515.2px;width:13px;height:13px;background:#3f3e46;border-radius:3.5px;"></div>
<span id="t54" class="t" style="left:1557.3px;top:514.80px;font-size:12.5px;line-height:15px;color:#f0f0f2;font-weight:700;letter-spacing:0.091px;">Audio translator</span>
<div style="position:absolute;left:1660px;top:515.8px;width:26px;height:11.4px;background:linear-gradient(100deg,#cbbcf4,#e6defc);border-radius:2.5px;"></div>
<span id="t55" class="t" style="left:1673px;transform:translateX(-50%);top:516.70px;font-size:8.5px;line-height:10px;color:#15151a;font-weight:700;font-style:italic;">Pro</span>
<svg style="position:absolute;left:1690.5px;top:520px;" width="6" height="4" viewBox="0 0 6 4"><path d="M0 3.500L3 0.500L6 3.500Z" fill="#3c3c40"/></svg>
<svg style="position:absolute;left:2005.80px;top:514.20px;" width="15" height="15" viewBox="0 0 24 24" fill="none" stroke="#252528" stroke-width="1.9" stroke-linecap="round" stroke-linejoin="round"><path d="M5.200 7A8 8 0 1 1 4 12"/><path d="M4.500 2.500V7.500H9.500"/></svg>
<span id="t56" class="t" style="left:1536px;top:541.30px;font-size:13px;line-height:16px;color:#b2b2b6;font-weight:400;letter-spacing:0.219px;">Translate your audio into another language with your original voice.</span>
<span id="t57" class="t" style="left:1536px;top:578.70px;font-size:13px;line-height:16px;color:#3b3b3f;font-weight:400;letter-spacing:0.241px;">Translate from</span>
<div style="position:absolute;left:1633px;top:575.7px;width:392.7px;height:22.6px;background:#202022;border-radius:4px;"></div>
<span id="t58" class="t" style="left:1641px;top:578.70px;font-size:13px;line-height:16px;color:#3b3b3f;font-weight:400;letter-spacing:0.051px;">English</span>
<svg style="position:absolute;left:2011px;top:584px;" width="9.5" height="6.5" viewBox="0 0 9.5 6.5"><path d="M1 1L4.750 5L8.500 1" fill="none" stroke="#38383b" stroke-width="1.5"/></svg>
<div style="position:absolute;left:10px;top:629.300px;width:2028px;height:390.700px;border-radius:9px 9px 7px 7px;overflow:hidden;background:#1c1c1d"><div style="position:absolute;left:0;top:0;width:2028px;height:33.300px;background:#28292d"></div></div>
<svg style="position:absolute;left:20px;top:638px;" width="14" height="17" viewBox="0 0 14 17"><path d="M1.500 1.500L12 9.500L7.800 10.300L10.300 15L8.300 16L5.900 11.200L2.800 14Z" fill="none" stroke="#dcdcdf" stroke-width="1.5" stroke-linejoin="round"/></svg>
<svg style="position:absolute;left:46.5px;top:644px;" width="9.5" height="6.5" viewBox="0 0 9.5 6.5"><path d="M1 1L4.750 5L8.500 1" fill="none" stroke="#a0a0a4" stroke-width="1.6"/></svg>
<div style="position:absolute;left:69.4px;top:637.7px;width:1px;height:16px;background:#3b3b3f;border-radius:0px;"></div>
<svg style="position:absolute;left:83.85px;top:637.85px;" width="15.5" height="15.5" viewBox="0 0 24 24" fill="none" stroke="#dcdcdf" stroke-width="2.1" stroke-linecap="round" stroke-linejoin="round"><path d="M6.500 3L2.500 7L6.500 11"/><path d="M2.500 7H15A5.500 5.500 0 0 1 15 18.500H5.500"/></svg>
<svg style="position:absolute;left:117.85px;top:637.85px;" width="15.5" height="15.5" viewBox="0 0 24 24" fill="none" stroke="#3d3d41" stroke-width="2.1" stroke-linecap="round" stroke-linejoin="round"><path d="M17.500 3L21.500 7L17.500 11"/><path d="M21.500 7H9A5.500 5.500 0 0 0 9 18.500H18.500"/></svg>
<svg style="position:absolute;left:152.7px;top:638px;" width="14" height="16" viewBox="0 0 14 16"><path d="M2.500 1.500C5 1.500 5.600 2.500 5.600 4V12C5.600 13.500 5 14.500 2.500 14.500" fill="none" stroke="#dcdcdf" stroke-width="1.9"/><path d="M11.500 1.500C9 1.500 8.400 2.500 8.400 4V12C8.400 13.500 9 14.500 11.500 14.500" fill="none" stroke="#dcdcdf" stroke-width="1.9"/></svg>
<svg style="position:absolute;left:186.8px;top:638px;" width="14" height="16" viewBox="0 0 14 16"><path d="M5.600 1.500V14.500" stroke="#8d8d91" stroke-width="1.6" fill="none"/><path d="M3 1.500H5.600M3 14.500H5.600" stroke="#8d8d91" stroke-width="1.4" fill="none"/><path d="M11.500 1.500C9 1.500 8.400 2.500 8.400 4V12C8.400 13.500 9 14.500 11.500 14.500" fill="none" stroke="#dcdcdf" stroke-width="1.9"/></svg>
<svg style="position:absolute;left:221.2px;top:638px;" width="14" height="16" viewBox="0 0 14 16"><path d="M2.500 1.500C5 1.500 5.600 2.500 5.600 4V12C5.600 13.500 5 14.500 2.500 14.500" fill="none" stroke="#dcdcdf" stroke-width="1.9"/><path d="M8.400 1.500V14.500" stroke="#8d8d91" stroke-width="1.6" fill="none"/><path d="M11 1.500H8.400M11 14.500H8.400" stroke="#8d8d91" stroke-width="1.4" fill="none"/></svg>
<svg style="position:absolute;left:253.50px;top:636.90px;" width="17" height="17" viewBox="0 0 24 24" fill="none" stroke="#dcdcdf" stroke-width="2.2" stroke-linecap="round" stroke-linejoin="round"><path d="M3 5.500H21M9 5.500V3H15V5.500M5.500 5.500V20.500H18.500V5.500"/></svg>
<svg style="position:absolute;left:296.50px;top:637.50px;" width="17" height="17" viewBox="0 0 24 24" fill="none" stroke="#dcdcdf" stroke-width="2.1" stroke-linecap="round" stroke-linejoin="round"><path d="M4.500 4.500H14M4.500 4.500V12C4.500 16 8 19 12 21C16 19 19.500 16 19.500 12V10"/><path d="M16.500 2V7.500M19.500 2.500V7M22 3.500V6"/></svg>
<svg style="position:absolute;left:339.95px;top:637.75px;" width="16.5" height="16.5" viewBox="0 0 24 24" fill="none" stroke="#dcdcdf" stroke-width="2.2" stroke-linecap="round" stroke-linejoin="round"><path d="M4.500 4H19.500V12C19.500 16 16 19 12 21C8 19 4.500 16 4.500 12Z"/></svg>
<svg style="position:absolute;left:380px;top:640px;" width="21" height="18" viewBox="0 0 21 18"><rect x="1" y="2.500" width="14" height="11.500" rx="1.500" fill="none" stroke="#bdbdc1" stroke-width="1.5"/><path d="M4.500 10.500C5.500 7.500 7 7 8 9C9 11 10.500 10 11.500 7.500" fill="none" stroke="#bdbdc1" stroke-width="1.3"/><path d="M13 12H15.500L18.500 9.500V17.500L15.500 15H13Z" fill="#a9a9ad"/></svg>
<div style="position:absolute;left:379.2px;top:632.8px;width:25.2px;height:8.8px;background:linear-gradient(100deg,#cbbcf4,#e6defc);border-radius:2.5px;"></div>
<span id="t59" class="t" style="left:391.8px;transform:translateX(-50%);top:632.40px;font-size:8px;line-height:10px;color:#15151a;font-weight:700;font-style:italic;">Pro</span>
<svg style="position:absolute;left:1613.40px;top:637.20px;" width="18" height="18" viewBox="0 0 24 24" fill="none" stroke="#dcdcdf" stroke-width="1.9" stroke-linecap="round" stroke-linejoin="round"><rect x="8.700" y="2.500" width="6.600" height="11.500" rx="3.300"/><path d="M5 11C5 15 8 17.500 12 17.500C16 17.500 19 15 19 11M12 17.500V21.500M8.500 21.500H15.500"/></svg>
<div style="position:absolute;left:1652.8px;top:638px;width:1px;height:16px;background:#34343a;border-radius:0px;"></div>
<div style="position:absolute;left:1670.3px;top:633.8px;width:25.4px;height:24.4px;background:#1b1c20;border-radius:4px;"></div>
<svg style="position:absolute;left:1673px;top:640.2px;overflow:visible;" width="20" height="12" viewBox="0 0 20 12"><rect x="1" y="3" width="4.500" height="6" fill="#45bccb"/><rect x="11.500" y="3" width="7.500" height="6" fill="none" stroke="#45bccb" stroke-width="1.5"/><path d="M6 6H11M9 4L11 6L9 8" stroke="#45bccb" stroke-width="1.3" fill="none"/></svg>
<svg style="position:absolute;left:1715.6px;top:640.2px;overflow:visible;" width="20" height="12" viewBox="0 0 20 12"><rect x="1.500" y="3" width="17" height="6" rx="1.500" fill="none" stroke="#dcdcdf" stroke-width="1.5"/><path d="M10 -3V15M0 6H20" stroke="#dcdcdf" stroke-width="1.300" stroke-dasharray="1.800 1.600" fill="none"/><path d="M6.500 -1.500L7.500 0M13.500 -1.500L12.500 0M6.500 13.500L7.500 12M13.500 13.500L12.500 12" stroke="#dcdcdf" stroke-width="1.100" fill="none"/></svg>
<div style="position:absolute;left:1755.6px;top:633.8px;width:25.4px;height:24.4px;background:#1b1c20;border-radius:4px;"></div>
<svg style="position:absolute;left:1758.3px;top:640.2px;overflow:visible;" width="20" height="12" viewBox="0 0 20 12"><rect x="1" y="3" width="6" height="6" fill="none" stroke="#45bccb" stroke-width="1.5"/><rect x="13" y="3" width="6" height="6" fill="#45bccb"/><path d="M7.500 6H12.500" stroke="#45bccb" stroke-width="1.3" fill="none"/><rect x="3" y="4.500" width="2" height="3" fill="#45bccb"/></svg>
<div style="position:absolute;left:1798.0px;top:633.8px;width:25.4px;height:24.4px;background:#1b1c20;border-radius:4px;"></div>
<svg style="position:absolute;left:1800.7px;top:640.2px;overflow:visible;" width="20" height="12" viewBox="0 0 20 12"><rect x="1" y="3" width="6.500" height="6" fill="#45bccb"/><rect x="12.500" y="3" width="6.500" height="6" fill="#45bccb"/><path d="M10 0.500V11.500" stroke="#45bccb" stroke-width="1.4" fill="none"/></svg>
<div style="position:absolute;left:1832.8px;top:638px;width:1px;height:16px;background:#34343a;border-radius:0px;"></div>
<svg style="position:absolute;left:1844.5px;top:638.5px;" width="20" height="16" viewBox="0 0 20 16"><path d="M16.500 6V2.500A1 1 0 0 0 15.500 1.500H2A1 1 0 0 0 1 2.500V9.500A1 1 0 0 0 2 10.500H8.500" fill="none" stroke="#dcdcdf" stroke-width="1.5"/><path d="M3.500 4.500L5 7.500L7 4.500L8.500 7.500" fill="none" stroke="#dcdcdf" stroke-width="1.100"/><circle cx="13" cy="9.500" r="3.300" fill="none" stroke="#dcdcdf" stroke-width="1.4"/><path d="M15.500 12L18 14.500" stroke="#dcdcdf" stroke-width="1.5" fill="none"/></svg>
<svg style="position:absolute;left:1876.60px;top:638.30px;" width="16" height="16" viewBox="0 0 24 24" fill="none" stroke="#dcdcdf" stroke-width="2.1" stroke-linecap="round" stroke-linejoin="round"><circle cx="12" cy="12" r="9"/><path d="M8 12H16"/></svg>
<div style="position:absolute;left:1908px;top:645.6px;width:97px;height:1.4px;background:#35353a;border-radius:0px;"></div>
<div style="position:absolute;left:1903.500px;top:639.400px;width:9px;height:13.600px;background:#f4f4f6;border-radius:3px 3px 4.500px 4.500px"></div>
<svg style="position:absolute;left:2013.30px;top:638.30px;" width="16" height="16" viewBox="0 0 24 24" fill="none" stroke="#dcdcdf" stroke-width="2.1" stroke-linecap="round" stroke-linejoin="round"><circle cx="12" cy="12" r="9"/><path d="M8 12H16M12 8V16"/></svg>
<div style="position:absolute;left:10px;top:662.3px;width:2028px;height:1px;background:#171719;border-radius:0px;"></div>
<svg style="position:absolute;left:0;top:0" width="2044" height="700"><rect x="235.46" y="667.700" width="1.200" height="6" fill="#333337"/><rect x="256.62" y="667.700" width="1.200" height="6" fill="#333337"/><rect x="277.77" y="667.700" width="1.200" height="6" fill="#333337"/><rect x="298.92" y="667.700" width="1.200" height="6" fill="#333337"/><rect x="320.08" y="667.700" width="1.200" height="6" fill="#333337"/><rect x="341.24" y="667.700" width="1.200" height="6" fill="#333337"/><rect x="362.39" y="667.700" width="1.200" height="6" fill="#333337"/><rect x="383.54" y="667.700" width="1.200" height="6" fill="#333337"/><rect x="404.50" y="668.700" width="1.300" height="10" fill="#505054"/><rect x="447.01" y="667.700" width="1.200" height="6" fill="#333337"/><rect x="468.17" y="667.700" width="1.200" height="6" fill="#333337"/><rect x="489.32" y="667.700" width="1.200" height="6" fill="#333337"/><rect x="510.48" y="667.700" width="1.200" height="6" fill="#333337"/><rect x="531.63" y="667.700" width="1.200" height="6" fill="#333337"/><rect x="552.78" y="667.700" width="1.200" height="6" fill="#333337"/><rect x="573.94" y="667.700" width="1.200" height="6" fill="#333337"/><rect x="595.10" y="667.700" width="1.200" height="6" fill="#333337"/><rect x="616.05" y="668.700" width="1.300" height="10" fill="#505054"/><rect x="658.56" y="667.700" width="1.200" height="6" fill="#333337"/><rect x="679.72" y="667.700" width="1.200" height="6" fill="#333337"/><rect x="700.87" y="667.700" width="1.200" height="6" fill="#333337"/><rect x="722.02" y="667.700" width="1.200" height="6" fill="#333337"/><rect x="743.18" y="667.700" width="1.200" height="6" fill="#333337"/><rect x="764.34" y="667.700" width="1.200" height="6" fill="#333337"/><rect x="785.49" y="667.700" width="1.200" height="6" fill="#333337"/><rect x="806.64" y="667.700" width="1.200" height="6" fill="#333337"/><rect x="827.60" y="668.700" width="1.300" height="10" fill="#505054"/><rect x="870.11" y="667.700" width="1.200" height="6" fill="#333337"/><rect x="891.27" y="667.700" width="1.200" height="6" fill="#333337"/><rect x="912.42" y="667.700" width="1.200" height="6" fill="#333337"/><rect x="933.58" y="667.700" width="1.200" height="6" fill="#333337"/><rect x="954.73" y="667.700" width="1.200" height="6" fill="#333337"/><rect x="975.89" y="667.700" width="1.200" height="6" fill="#333337"/><rect x="997.04" y="667.700" width="1.200" height="6" fill="#333337"/><rect x="1018.20" y="667.700" width="1.200" height="6" fill="#333337"/><rect x="1039.15" y="668.700" width="1.300" height="10" fill="#505054"/><rect x="1081.66" y="667.700" width="1.200" height="6" fill="#333337"/><rect x="1102.82" y="667.700" width="1.200" height="6" fill="#333337"/><rect x="1123.97" y="667.700" width="1.200" height="6" fill="#333337"/><rect x="1145.13" y="667.700" width="1.200" height="6" fill="#333337"/><rect x="1166.28" y="667.700" width="1.200" height="6" fill="#333337"/><rect x="1187.44" y="667.700" width="1.200" height="6" fill="#333337"/><rect x="1208.59" y="667.700" width="1.200" height="6" fill="#333337"/><rect x="1229.75" y="667.700" width="1.200" height="6" fill="#333337"/><rect x="1250.70" y="668.700" width="1.300" height="10" fill="#505054"/><rect x="1293.21" y="667.700" width="1.200" height="6" fill="#333337"/><rect x="1314.37" y="667.700" width="1.200" height="6" fill="#333337"/><rect x="1335.52" y="667.700" width="1.200" height="6" fill="#333337"/><rect x="1356.68" y="667.700" width="1.200" height="6" fill="#333337"/><rect x="1377.83" y="667.700" width="1.200" height="6" fill="#333337"/><rect x="1398.99" y="667.700" width="1.200" height="6" fill="#333337"/><rect x="1420.14" y="667.700" width="1.200" height="6" fill="#333337"/><rect x="1441.30" y="667.700" width="1.200" height="6" fill="#333337"/><rect x="1462.25" y="668.700" width="1.300" height="10" fill="#505054"/><rect x="1504.76" y="667.700" width="1.200" height="6" fill="#333337"/><rect x="1525.92" y="667.700" width="1.200" height="6" fill="#333337"/><rect x="1547.07" y="667.700" width="1.200" height="6" fill="#333337"/><rect x="1568.23" y="667.700" width="1.200" height="6" fill="#333337"/><rect x="1589.38" y="667.700" width="1.200" height="6" fill="#333337"/><rect x="1610.54" y="667.700" width="1.200" height="6" fill="#333337"/><rect x="1631.69" y="667.700" width="1.200" height="6" fill="#333337"/><rect x="1652.85" y="667.700" width="1.200" height="6" fill="#333337"/><rect x="1673.80" y="668.700" width="1.300" height="10" fill="#505054"/><rect x="1716.31" y="667.700" width="1.200" height="6" fill="#333337"/><rect x="1737.47" y="667.700" width="1.200" height="6" fill="#333337"/><rect x="1758.62" y="667.700" width="1.200" height="6" fill="#333337"/><rect x="1779.78" y="667.700" width="1.200" height="6" fill="#333337"/><rect x="1800.93" y="667.700" width="1.200" height="6" fill="#333337"/><rect x="1822.09" y="667.700" width="1.200" height="6" fill="#333337"/><rect x="1843.24" y="667.700" width="1.200" height="6" fill="#333337"/><rect x="1864.40" y="667.700" width="1.200" height="6" fill="#333337"/><rect x="1885.35" y="668.700" width="1.300" height="10" fill="#505054"/><rect x="1927.86" y="667.700" width="1.200" height="6" fill="#333337"/><rect x="1949.02" y="667.700" width="1.200" height="6" fill="#333337"/><rect x="1970.17" y="667.700" width="1.200" height="6" fill="#333337"/><rect x="1991.33" y="667.700" width="1.200" height="6" fill="#333337"/><rect x="2012.48" y="667.700" width="1.200" height="6" fill="#333337"/></svg>
<span id="t60" class="t" style="left:200.25px;top:666.80px;font-size:11.5px;line-height:14px;color:#4c4c50;font-weight:400;letter-spacing:0.244px;">00:00</span>
<span id="t61" class="t" style="left:409.8px;top:666.80px;font-size:11.5px;line-height:14px;color:#5e5e62;font-weight:400;letter-spacing:0.344px;">01:00</span>
<span id="t62" class="t" style="left:621.35px;top:666.80px;font-size:11.5px;line-height:14px;color:#5e5e62;font-weight:400;letter-spacing:0.344px;">02:00</span>
<span id="t63" class="t" style="left:832.9000000000001px;top:666.80px;font-size:11.5px;line-height:14px;color:#5e5e62;font-weight:400;letter-spacing:0.344px;">03:00</span>
<span id="t64" class="t" style="left:1044.45px;top:666.80px;font-size:11.5px;line-height:14px;color:#5e5e62;font-weight:400;letter-spacing:0.344px;">04:00</span>
<span id="t65" class="t" style="left:1256.0px;top:666.80px;font-size:11.5px;line-height:14px;color:#5e5e62;font-weight:400;letter-spacing:0.344px;">05:00</span>
<span id="t66" class="t" style="left:1467.5500000000002px;top:666.80px;font-size:11.5px;line-height:14px;color:#5e5e62;font-weight:400;letter-spacing:0.344px;">06:00</span>
<span id="t67" class="t" style="left:1679.1000000000001px;top:666.80px;font-size:11.5px;line-height:14px;color:#5e5e62;font-weight:400;letter-spacing:0.344px;">07:00</span>
<span id="t68" class="t" style="left:1890.65px;top:666.80px;font-size:11.5px;line-height:14px;color:#5e5e62;font-weight:400;letter-spacing:0.344px;">08:00</span>
<div style="position:absolute;left:10px;top:811.3px;width:131.5px;height:81px;background:#212124;border-radius:0px;"></div>
<div style="position:absolute;left:10px;top:896.6px;width:131.5px;height:52.6px;background:#212124;border-radius:0px;"></div>
<div style="position:absolute;left:196px;top:811.3px;width:1836px;height:80.5px;background:#1f1f21;border-radius:0px;"></div>
<div style="position:absolute;left:196px;top:896.6px;width:1836px;height:52.6px;background:#262628;border-radius:0px;"></div>
<div style="position:absolute;left:141.3px;top:690px;width:1px;height:330px;background:#202023;border-radius:0px;"></div>
<svg style="position:absolute;left:17.5px;top:846.6px;" width="14.5" height="10.5" viewBox="0 0 14.5 10.5"><rect x="0.800" y="0.800" width="12.900" height="8.900" rx="1.200" fill="none" stroke="#5c5c60" stroke-width="1.3"/><path d="M5.800 3.400L9.300 5.250L5.800 7.100Z" fill="#5c5c60"/></svg>
<svg style="position:absolute;left:43.65px;top:845.25px;" width="12.5" height="12.5" viewBox="0 0 24 24" fill="none" stroke="#b9b9bd" stroke-width="2.4" stroke-linecap="round" stroke-linejoin="round"><rect x="4.500" y="10.500" width="15" height="10.500" rx="1.500" fill="#b9b9bd"/><path d="M8 10.500V7.500A4 4 0 0 1 16 7.500V10.500"/></svg>
<svg style="position:absolute;left:69.05px;top:845.05px;" width="13.5" height="13.5" viewBox="0 0 24 24" fill="none" stroke="#b9b9bd" stroke-width="2.3" stroke-linecap="round" stroke-linejoin="round"><path d="M1.500 12C4.500 6.500 19.500 6.500 22.500 12C19.500 17.500 4.500 17.500 1.500 12Z"/><circle cx="12" cy="12" r="3" fill="#b9b9bd"/></svg>
<svg style="position:absolute;left:94.55px;top:845.05px;" width="13.5" height="13.5" viewBox="0 0 24 24" fill="none" stroke="#b9b9bd" stroke-width="2.2" stroke-linecap="round" stroke-linejoin="round"><path d="M3 9H7L12 4.500V19.500L7 15H3Z" fill="#b9b9bd"/><path d="M15.500 8.500V15.500M19 6.500V17.500"/></svg>
<svg style="position:absolute;left:121.0px;top:850.0px;" width="11" height="3" viewBox="0 0 11 3"><rect x="0" y="0.700" width="2.600" height="1.500" fill="#77777b"/><rect x="4.200" y="0.700" width="2.600" height="1.500" fill="#77777b"/><rect x="8.400" y="0.700" width="2.600" height="1.500" fill="#77777b"/></svg>
<svg style="position:absolute;left:17.15px;top:916.05px;" width="14.5" height="14.5" viewBox="0 0 24 24" fill="none" stroke="#5c5c60" stroke-width="1.8" stroke-linecap="round" stroke-linejoin="round"><path d="M8.500 3.300A9.500 9.500 0 1 0 15.500 3.300" /><path d="M12.800 14V5L16.500 7"/><circle cx="10.800" cy="14.300" r="2"/></svg>
<svg style="position:absolute;left:43.65px;top:916.75px;" width="12.5" height="12.5" viewBox="0 0 24 24" fill="none" stroke="#b9b9bd" stroke-width="2.4" stroke-linecap="round" stroke-linejoin="round"><rect x="4.500" y="10.500" width="15" height="10.500" rx="1.500" fill="#b9b9bd"/><path d="M8 10.500V7.500A4 4 0 0 1 16 7.500V10.500"/></svg>
<svg style="position:absolute;left:94.55px;top:916.55px;" width="13.5" height="13.5" viewBox="0 0 24 24" fill="none" stroke="#b9b9bd" stroke-width="2.2" stroke-linecap="round" stroke-linejoin="round"><path d="M3 9H7L12 4.500V19.500L7 15H3Z" fill="#b9b9bd"/><path d="M15.500 8.500V15.500M19 6.500V17.500"/></svg>
<svg style="position:absolute;left:121.0px;top:921.5px;" width="11" height="3" viewBox="0 0 11 3"><rect x="0" y="0.700" width="2.600" height="1.500" fill="#77777b"/><rect x="4.200" y="0.700" width="2.600" height="1.500" fill="#77777b"/><rect x="8.400" y="0.700" width="2.600" height="1.500" fill="#77777b"/></svg>
<div style="position:absolute;left:146.500px;top:831.300px;width:40px;height:40.500px;border-radius:4px;background:#29292c;border:1px dotted #3a3a3e;box-sizing:border-box"></div>
<svg style="position:absolute;left:160.05px;top:839.05px;" width="12.5" height="12.5" viewBox="0 0 24 24" fill="none" stroke="#d8d8db" stroke-width="2.2" stroke-linecap="round" stroke-linejoin="round"><path d="M14.500 4.500L19.500 9.500L9.500 19.500H4.500V14.500Z"/><path d="M3.500 23H20.500"/></svg>
<span id="t69" class="t" style="left:166.2px;transform:translateX(-50%);top:852.20px;font-size:11.5px;line-height:14px;color:#d8d8db;font-weight:400;letter-spacing:0.263px;">Cover</span>
<div style="position:absolute;left:196.500px;top:813.900px;width:594px;height:76.200px;border-radius:4px;overflow:hidden;background:#1f5559"><div style="position:absolute;left:1.800px;top:2.500px;width:88.500px;height:14.500px;background:#2a656a;border-radius:2px"></div><div style="position:absolute;left:96.300px;top:2.500px;width:70px;height:14.500px;background:#2a656a;border-radius:2px"></div><svg style="position:absolute;left:0;top:20px" width="594" height="38.500" viewBox="0 0 594 38.500"><rect width="594" height="38.500" fill="#c3d0c3"/><svg x="0.00" y="-7.40" width="53.3" height="53.3" viewBox="0 0 468 468" preserveAspectRatio="none"><use href="#mp3"/></svg><svg x="53.30" y="-7.40" width="53.3" height="53.3" viewBox="0 0 468 468" preserveAspectRatio="none"><use href="#mp3"/></svg><svg x="106.60" y="-7.40" width="53.3" height="53.3" viewBox="0 0 468 468" preserveAspectRatio="none"><use href="#mp3"/></svg><svg x="159.90" y="-7.40" width="53.3" height="53.3" viewBox="0 0 468 468" preserveAspectRatio="none"><use href="#mp3"/></svg><svg x="213.20" y="-7.40" width="53.3" height="53.3" viewBox="0 0 468 468" preserveAspectRatio="none"><use href="#mp3"/></svg><svg x="266.50" y="-7.40" width="53.3" height="53.3" viewBox="0 0 468 468" preserveAspectRatio="none"><use href="#mp3"/></svg><svg x="319.80" y="-7.40" width="53.3" height="53.3" viewBox="0 0 468 468" preserveAspectRatio="none"><use href="#mp3"/></svg><svg x="373.10" y="-7.40" width="53.3" height="53.3" viewBox="0 0 468 468" preserveAspectRatio="none"><use href="#mp3"/></svg><svg x="426.40" y="-7.40" width="53.3" height="53.3" viewBox="0 0 468 468" preserveAspectRatio="none"><use href="#mp3"/></svg><svg x="479.70" y="-7.40" width="53.3" height="53.3" viewBox="0 0 468 468" preserveAspectRatio="none"><use href="#mp3"/></svg><svg x="533.00" y="-7.40" width="53.3" height="53.3" viewBox="0 0 468 468" preserveAspectRatio="none"><use href="#mp3"/></svg><svg x="586.30" y="-7.40" width="53.3" height="53.3" viewBox="0 0 468 468" preserveAspectRatio="none"><use href="#mp3"/></svg><rect width="594" height="38.500" fill="#fff" opacity=".2"/></svg></div>
<span id="t70" class="t" style="left:201.2px;top:817.00px;font-size:11.5px;line-height:14px;color:#e6f3f3;font-weight:400;letter-spacing:0.383px;">mp3 player.png</span>
<span id="t71" class="t" style="left:295.3px;top:817.00px;font-size:11.5px;line-height:14px;color:#e6f3f3;font-weight:400;letter-spacing:0.385px;">00:02:49:05</span>
<div style="position:absolute;left:192.2px;top:898.5px;width:610.8px;height:49.3px;border-radius:4px;background:#1a3463;box-sizing:border-box;border:1.600px solid #e4e7ee;border-left:3px solid #f4f4f6;overflow:hidden"></div>
<svg style="position:absolute;left:192.2px;top:898.5px" width="610.8" height="49.3" viewBox="0 0 610.8 49.3"><defs><clipPath id="acl"><rect x="3" y="2" width="605.8" height="45.3" rx="2"/></clipPath></defs><g clip-path="url(#acl)"><rect x="5.500" y="4" width="268" height="14.500" fill="#2a4676" rx="1.500"/><clipPath id="wcl"><polygon points="3.8,48.5 5.8,28.5 7.4,26.3 9.0,25.4 10.6,28.0 12.2,25.0 13.8,27.4 15.4,26.5 17.0,24.9 18.6,27.2 20.2,24.8 21.8,26.9 23.4,25.0 25.0,25.1 26.6,26.8 28.2,28.9 29.8,25.2 31.4,25.8 33.0,27.9 34.6,29.5 36.2,27.6 37.8,24.2 39.4,27.2 41.0,22.3 42.6,26.6 44.2,23.6 45.8,22.9 47.4,22.7 49.0,23.7 50.6,26.3 51.3,31.0 51.3,20.9 188.1,20.9 188.1,28.5 189.7,25.5 191.3,27.6 192.9,27.9 194.5,26.5 196.1,27.4 197.7,24.9 199.3,24.9 200.9,25.7 202.5,28.1 204.1,26.8 205.7,26.2 207.3,27.6 208.9,27.0 210.5,26.2 212.1,28.7 213.7,28.2 215.3,25.9 216.9,27.6 218.5,27.3 220.1,29.2 221.7,28.4 223.3,26.1 224.9,27.2 226.5,22.7 228.1,24.3 229.7,26.0 231.3,22.9 232.9,24.6 234.5,22.3 236.1,25.6 237.7,26.1 237.8,31.0 237.8,20.9 420.8,20.9 420.8,28.5 422.4,27.6 424.0,29.2 425.6,26.2 427.2,28.2 428.8,27.7 430.4,27.6 432.0,27.0 433.6,29.0 435.2,29.5 436.8,27.1 438.4,28.1 440.0,24.9 441.6,28.2 443.2,28.0 444.8,29.8 446.4,28.9 448.0,26.1 449.6,26.6 451.2,28.1 452.8,24.7 454.4,27.0 456.0,25.5 457.6,25.2 459.2,22.4 460.8,26.1 462.4,22.8 464.0,23.4 465.6,24.1 467.2,26.6 468.8,22.5 470.4,24.4 471.8,31.0 471.8,20.9 571.8,20.9 571.8,20.9 605.3,48.5"/></clipPath><polygon points="3.8,48.5 5.8,28.5 7.4,26.3 9.0,25.4 10.6,28.0 12.2,25.0 13.8,27.4 15.4,26.5 17.0,24.9 18.6,27.2 20.2,24.8 21.8,26.9 23.4,25.0 25.0,25.1 26.6,26.8 28.2,28.9 29.8,25.2 31.4,25.8 33.0,27.9 34.6,29.5 36.2,27.6 37.8,24.2 39.4,27.2 41.0,22.3 42.6,26.6 44.2,23.6 45.8,22.9 47.4,22.7 49.0,23.7 50.6,26.3 51.3,31.0 51.3,20.9 188.1,20.9 188.1,28.5 189.7,25.5 191.3,27.6 192.9,27.9 194.5,26.5 196.1,27.4 197.7,24.9 199.3,24.9 200.9,25.7 202.5,28.1 204.1,26.8 205.7,26.2 207.3,27.6 208.9,27.0 210.5,26.2 212.1,28.7 213.7,28.2 215.3,25.9 216.9,27.6 218.5,27.3 220.1,29.2 221.7,28.4 223.3,26.1 224.9,27.2 226.5,22.7 228.1,24.3 229.7,26.0 231.3,22.9 232.9,24.6 234.5,22.3 236.1,25.6 237.7,26.1 237.8,31.0 237.8,20.9 420.8,20.9 420.8,28.5 422.4,27.6 424.0,29.2 425.6,26.2 427.2,28.2 428.8,27.7 430.4,27.6 432.0,27.0 433.6,29.0 435.2,29.5 436.8,27.1 438.4,28.1 440.0,24.9 441.6,28.2 443.2,28.0 444.8,29.8 446.4,28.9 448.0,26.1 449.6,26.6 451.2,28.1 452.8,24.7 454.4,27.0 456.0,25.5 457.6,25.2 459.2,22.4 460.8,26.1 462.4,22.8 464.0,23.4 465.6,24.1 467.2,26.6 468.8,22.5 470.4,24.4 471.8,31.0 471.8,20.9 571.8,20.9 571.8,20.9 605.3,48.5" fill="#2b5f98"/><g clip-path="url(#wcl)"><rect x="7.8" y="22.5" width="0.600" height="26" fill="#24558c" opacity=".55"/><rect x="11.0" y="22.5" width="0.600" height="26" fill="#24558c" opacity=".55"/><rect x="14.2" y="22.5" width="0.600" height="26" fill="#24558c" opacity=".55"/><rect x="17.4" y="22.5" width="0.600" height="26" fill="#24558c" opacity=".55"/><rect x="20.6" y="22.5" width="0.600" height="26" fill="#24558c" opacity=".55"/><rect x="23.8" y="22.5" width="0.600" height="26" fill="#24558c" opacity=".55"/><rect x="27.0" y="22.5" width="0.600" height="26" fill="#24558c" opacity=".55"/><rect x="30.2" y="22.5" width="0.600" height="26" fill="#24558c" opacity=".55"/><rect x="33.4" y="22.5" width="0.600" height="26" fill="#24558c" opacity=".55"/><rect x="36.6" y="22.5" width="0.600" height="26" fill="#24558c" opacity=".55"/><rect x="39.8" y="22.5" width="0.600" height="26" fill="#24558c" opacity=".55"/><rect x="43.0" y="22.5" width="0.600" height="26" fill="#24558c" opacity=".55"/><rect x="46.2" y="22.5" width="0.600" height="26" fill="#24558c" opacity=".55"/><rect x="49.4" y="22.5" width="0.600" height="26" fill="#24558c" opacity=".55"/><rect x="52.6" y="22.5" width="0.600" height="26" fill="#24558c" opacity=".55"/><rect x="55.8" y="22.5" width="0.600" height="26" fill="#24558c" opacity=".55"/><rect x="59.0" y="22.5" width="0.600" height="26" fill="#24558c" opacity=".55"/><rect x="62.2" y="22.5" width="0.600" height="26" fill="#24558c" opacity=".55"/><rect x="65.4" y="22.5" width="0.600" height="26" fill="#24558c" opacity=".55"/><rect x="68.6" y="22.5" width="0.600" height="26" fill="#24558c" opacity=".55"/><rect x="71.8" y="22.5" width="0.600" height="26" fill="#24558c" opacity=".55"/><rect x="75.0" y="22.5" width="0.600" height="26" fill="#24558c" opacity=".55"/><rect x="78.2" y="22.5" width="0.600" height="26" fill="#24558c" opacity=".55"/><rect x="81.4" y="22.5" width="0.600" height="26" fill="#24558c" opacity=".55"/><rect x="84.6" y="22.5" width="0.600" height="26" fill="#24558c" opacity=".55"/><rect x="87.8" y="22.5" width="0.600" height="26" fill="#24558c" opacity=".55"/><rect x="91.0" y="22.5" width="0.600" height="26" fill="#24558c" opacity=".55"/><rect x="94.2" y="22.5" width="0.600" height="26" fill="#24558c" opacity=".55"/><rect x="97.4" y="22.5" width="0.600" height="26" fill="#24558c" opacity=".55"/><rect x="100.6" y="22.5" width="0.600" height="26" fill="#24558c" opacity=".55"/><rect x="103.8" y="22.5" width="0.600" height="26" fill="#24558c" opacity=".55"/><rect x="107.0" y="22.5" width="0.600" height="26" fill="#24558c" opacity=".55"/><rect x="110.2" y="22.5" width="0.600" height="26" fill="#24558c" opacity=".55"/><rect x="113.4" y="22.5" width="0.600" height="26" fill="#24558c" opacity=".55"/><rect x="116.6" y="22.5" width="0.600" height="26" fill="#24558c" opacity=".55"/><rect x="119.8" y="22.5" width="0.600" height="26" fill="#24558c" opacity=".55"/><rect x="123.0" y="22.5" width="0.600" height="26" fill="#24558c" opacity=".55"/><rect x="126.2" y="22.5" width="0.600" height="26" fill="#24558c" opacity=".55"/><rect x="129.4" y="22.5" width="0.600" height="26" fill="#24558c" opacity=".55"/><rect x="132.6" y="22.5" width="0.600" height="26" fill="#24558c" opacity=".55"/><rect x="135.8" y="22.5" width="0.600" height="26" fill="#24558c" opacity=".55"/><rect x="139.0" y="22.5" width="0.600" height="26" fill="#24558c" opacity=".55"/><rect x="142.2" y="22.5" width="0.600" height="26" fill="#24558c" opacity=".55"/><rect x="145.4" y="22.5" width="0.600" height="26" fill="#24558c" opacity=".55"/><rect x="148.6" y="22.5" width="0.600" height="26" fill="#24558c" opacity=".55"/><rect x="151.8" y="22.5" width="0.600" height="26" fill="#24558c" opacity=".55"/><rect x="155.0" y="22.5" width="0.600" height="26" fill="#24558c" opacity=".55"/><rect x="158.2" y="22.5" width="0.600" height="26" fill="#24558c" opacity=".55"/><rect x="161.4" y="22.5" width="0.600" height="26" fill="#24558c" opacity=".55"/><rect x="164.6" y="22.5" width="0.600" height="26" fill="#24558c" opacity=".55"/><rect x="167.8" y="22.5" width="0.600" height="26" fill="#24558c" opacity=".55"/><rect x="171.0" y="22.5" width="0.600" height="26" fill="#24558c" opacity=".55"/><rect x="174.2" y="22.5" width="0.600" height="26" fill="#24558c" opacity=".55"/><rect x="177.4" y="22.5" width="0.600" height="26" fill="#24558c" opacity=".55"/><rect x="180.6" y="22.5" width="0.600" height="26" fill="#24558c" opacity=".55"/><rect x="183.8" y="22.5" width="0.600" height="26" fill="#24558c" opacity=".55"/><rect x="187.0" y="22.5" width="0.600" height="26" fill="#24558c" opacity=".55"/><rect x="190.2" y="22.5" width="0.600" height="26" fill="#24558c" opacity=".55"/><rect x="193.4" y="22.5" width="0.600" height="26" fill="#24558c" opacity=".55"/><rect x="196.6" y="22.5" width="0.600" height="26" fill="#24558c" opacity=".55"/><rect x="199.8" y="22.5" width="0.600" height="26" fill="#24558c" opacity=".55"/><rect x="203.0" y="22.5" width="0.600" height="26" fill="#24558c" opacity=".55"/><rect x="206.2" y="22.5" width="0.600" height="26" fill="#24558c" opacity=".55"/><rect x="209.4" y="22.5" width="0.600" height="26" fill="#24558c" opacity=".55"/><rect x="212.6" y="22.5" width="0.600" height="26" fill="#24558c" opacity=".55"/><rect x="215.8" y="22.5" width="0.600" height="26" fill="#24558c" opacity=".55"/><rect x="219.0" y="22.5" width="0.600" height="26" fill="#24558c" opacity=".55"/><rect x="222.2" y="22.5" width="0.600" height="26" fill="#24558c" opacity=".55"/><rect x="225.4" y="22.5" width="0.600" height="26" fill="#24558c" opacity=".55"/><rect x="228.6" y="22.5" width="0.600" height="26" fill="#24558c" opacity=".55"/><rect x="231.8" y="22.5" width="0.600" height="26" fill="#24558c" opacity=".55"/><rect x="235.0" y="22.5" width="0.600" height="26" fill="#24558c" opacity=".55"/><rect x="238.2" y="22.5" width="0.600" height="26" fill="#24558c" opacity=".55"/><rect x="241.4" y="22.5" width="0.600" height="26" fill="#24558c" opacity=".55"/><rect x="244.6" y="22.5" width="0.600" height="26" fill="#24558c" opacity=".55"/><rect x="247.8" y="22.5" width="0.600" height="26" fill="#24558c" opacity=".55"/><rect x="251.0" y="22.5" width="0.600" height="26" fill="#24558c" opacity=".55"/><rect x="254.2" y="22.5" width="0.600" height="26" fill="#24558c" opacity=".55"/><rect x="257.4" y="22.5" width="0.600" height="26" fill="#24558c" opacity=".55"/><rect x="260.6" y="22.5" width="0.600" height="26" fill="#24558c" opacity=".55"/><rect x="263.8" y="22.5" width="0.600" height="26" fill="#24558c" opacity=".55"/><rect x="267.0" y="22.5" width="0.600" height="26" fill="#24558c" opacity=".55"/><rect x="270.2" y="22.5" width="0.600" height="26" fill="#24558c" opacity=".55"/><rect x="273.4" y="22.5" width="0.600" height="26" fill="#24558c" opacity=".55"/><rect x="276.6" y="22.5" width="0.600" height="26" fill="#24558c" opacity=".55"/><rect x="279.8" y="22.5" width="0.600" height="26" fill="#24558c" opacity=".55"/><rect x="283.0" y="22.5" width="0.600" height="26" fill="#24558c" opacity=".55"/><rect x="286.2" y="22.5" width="0.600" height="26" fill="#24558c" opacity=".55"/><rect x="289.4" y="22.5" width="0.600" height="26" fill="#24558c" opacity=".55"/><rect x="292.6" y="22.5" width="0.600" height="26" fill="#24558c" opacity=".55"/><rect x="295.8" y="22.5" width="0.600" height="26" fill="#24558c" opacity=".55"/><rect x="299.0" y="22.5" width="0.600" height="26" fill="#24558c" opacity=".55"/><rect x="302.2" y="22.5" width="0.600" height="26" fill="#24558c" opacity=".55"/><rect x="305.4" y="22.5" width="0.600" height="26" fill="#24558c" opacity=".55"/><rect x="308.6" y="22.5" width="0.600" height="26" fill="#24558c" opacity=".55"/><rect x="311.8" y="22.5" width="0.600" height="26" fill="#24558c" opacity=".55"/><rect x="315.0" y="22.5" width="0.600" height="26" fill="#24558c" opacity=".55"/><rect x="318.2" y="22.5" width="0.600" height="26" fill="#24558c" opacity=".55"/><rect x="321.4" y="22.5" width="0.600" height="26" fill="#24558c" opacity=".55"/><rect x="324.6" y="22.5" width="0.600" height="26" fill="#24558c" opacity=".55"/><rect x="327.8" y="22.5" width="0.600" height="26" fill="#24558c" opacity=".55"/><rect x="331.0" y="22.5" width="0.600" height="26" fill="#24558c" opacity=".55"/><rect x="334.2" y="22.5" width="0.600" height="26" fill="#24558c" opacity=".55"/><rect x="337.4" y="22.5" width="0.600" height="26" fill="#24558c" opacity=".55"/><rect x="340.6" y="22.5" width="0.600" height="26" fill="#24558c" opacity=".55"/><rect x="343.8" y="22.5" width="0.600" height="26" fill="#24558c" opacity=".55"/><rect x="347.0" y="22.5" width="0.600" height="26" fill="#24558c" opacity=".55"/><rect x="350.2" y="22.5" width="0.600" height="26" fill="#24558c" opacity=".55"/><rect x="353.4" y="22.5" width="0.600" height="26" fill="#24558c" opacity=".55"/><rect x="356.6" y="22.5" width="0.600" height="26" fill="#24558c" opacity=".55"/><rect x="359.8" y="22.5" width="0.600" height="26" fill="#24558c" opacity=".55"/><rect x="363.0" y="22.5" width="0.600" height="26" fill="#24558c" opacity=".55"/><rect x="366.2" y="22.5" width="0.600" height="26" fill="#24558c" opacity=".55"/><rect x="369.4" y="22.5" width="0.600" height="26" fill="#24558c" opacity=".55"/><rect x="372.6" y="22.5" width="0.600" height="26" fill="#24558c" opacity=".55"/><rect x="375.8" y="22.5" width="0.600" height="26" fill="#24558c" opacity=".55"/><rect x="379.0" y="22.5" width="0.600" height="26" fill="#24558c" opacity=".55"/><rect x="382.2" y="22.5" width="0.600" height="26" fill="#24558c" opacity=".55"/><rect x="385.4" y="22.5" width="0.600" height="26" fill="#24558c" opacity=".55"/><rect x="388.6" y="22.5" width="0.600" height="26" fill="#24558c" opacity=".55"/><rect x="391.8" y="22.5" width="0.600" height="26" fill="#24558c" opacity=".55"/><rect x="395.0" y="22.5" width="0.600" height="26" fill="#24558c" opacity=".55"/><rect x="398.2" y="22.5" width="0.600" height="26" fill="#24558c" opacity=".55"/><rect x="401.4" y="22.5" width="0.600" height="26" fill="#24558c" opacity=".55"/><rect x="404.6" y="22.5" width="0.600" height="26" fill="#24558c" opacity=".55"/><rect x="407.8" y="22.5" width="0.600" height="26" fill="#24558c" opacity=".55"/><rect x="411.0" y="22.5" width="0.600" height="26" fill="#24558c" opacity=".55"/><rect x="414.2" y="22.5" width="0.600" height="26" fill="#24558c" opacity=".55"/><rect x="417.4" y="22.5" width="0.600" height="26" fill="#24558c" opacity=".55"/><rect x="420.6" y="22.5" width="0.600" height="26" fill="#24558c" opacity=".55"/><rect x="423.8" y="22.5" width="0.600" height="26" fill="#24558c" opacity=".55"/><rect x="427.0" y="22.5" width="0.600" height="26" fill="#24558c" opacity=".55"/><rect x="430.2" y="22.5" width="0.600" height="26" fill="#24558c" opacity=".55"/><rect x="433.4" y="22.5" width="0.600" height="26" fill="#24558c" opacity=".55"/><rect x="436.6" y="22.5" width="0.600" height="26" fill="#24558c" opacity=".55"/><rect x="439.8" y="22.5" width="0.600" height="26" fill="#24558c" opacity=".55"/><rect x="443.0" y="22.5" width="0.600" height="26" fill="#24558c" opacity=".55"/><rect x="446.2" y="22.5" width="0.600" height="26" fill="#24558c" opacity=".55"/><rect x="449.4" y="22.5" width="0.600" height="26" fill="#24558c" opacity=".55"/><rect x="452.6" y="22.5" width="0.600" height="26" fill="#24558c" opacity=".55"/><rect x="455.8" y="22.5" width="0.600" height="26" fill="#24558c" opacity=".55"/><rect x="459.0" y="22.5" width="0.600" height="26" fill="#24558c" opacity=".55"/><rect x="462.2" y="22.5" width="0.600" height="26" fill="#24558c" opacity=".55"/><rect x="465.4" y="22.5" width="0.600" height="26" fill="#24558c" opacity=".55"/><rect x="468.6" y="22.5" width="0.600" height="26" fill="#24558c" opacity=".55"/><rect x="471.8" y="22.5" width="0.600" height="26" fill="#24558c" opacity=".55"/><rect x="475.0" y="22.5" width="0.600" height="26" fill="#24558c" opacity=".55"/><rect x="478.2" y="22.5" width="0.600" height="26" fill="#24558c" opacity=".55"/><rect x="481.4" y="22.5" width="0.600" height="26" fill="#24558c" opacity=".55"/><rect x="484.6" y="22.5" width="0.600" height="26" fill="#24558c" opacity=".55"/><rect x="487.8" y="22.5" width="0.600" height="26" fill="#24558c" opacity=".55"/><rect x="491.0" y="22.5" width="0.600" height="26" fill="#24558c" opacity=".55"/><rect x="494.2" y="22.5" width="0.600" height="26" fill="#24558c" opacity=".55"/><rect x="497.4" y="22.5" width="0.600" height="26" fill="#24558c" opacity=".55"/><rect x="500.6" y="22.5" width="0.600" height="26" fill="#24558c" opacity=".55"/><rect x="503.8" y="22.5" width="0.600" height="26" fill="#24558c" opacity=".55"/><rect x="507.0" y="22.5" width="0.600" height="26" fill="#24558c" opacity=".55"/><rect x="510.2" y="22.5" width="0.600" height="26" fill="#24558c" opacity=".55"/><rect x="513.4" y="22.5" width="0.600" height="26" fill="#24558c" opacity=".55"/><rect x="516.6" y="22.5" width="0.600" height="26" fill="#24558c" opacity=".55"/><rect x="519.8" y="22.5" width="0.600" height="26" fill="#24558c" opacity=".55"/><rect x="523.0" y="22.5" width="0.600" height="26" fill="#24558c" opacity=".55"/><rect x="526.2" y="22.5" width="0.600" height="26" fill="#24558c" opacity=".55"/><rect x="529.4" y="22.5" width="0.600" height="26" fill="#24558c" opacity=".55"/><rect x="532.6" y="22.5" width="0.600" height="26" fill="#24558c" opacity=".55"/><rect x="535.8" y="22.5" width="0.600" height="26" fill="#24558c" opacity=".55"/><rect x="539.0" y="22.5" width="0.600" height="26" fill="#24558c" opacity=".55"/><rect x="542.2" y="22.5" width="0.600" height="26" fill="#24558c" opacity=".55"/><rect x="545.4" y="22.5" width="0.600" height="26" fill="#24558c" opacity=".55"/><rect x="548.6" y="22.5" width="0.600" height="26" fill="#24558c" opacity=".55"/><rect x="551.8" y="22.5" width="0.600" height="26" fill="#24558c" opacity=".55"/><rect x="555.0" y="22.5" width="0.600" height="26" fill="#24558c" opacity=".55"/><rect x="558.2" y="22.5" width="0.600" height="26" fill="#24558c" opacity=".55"/><rect x="561.4" y="22.5" width="0.600" height="26" fill="#24558c" opacity=".55"/><rect x="564.6" y="22.5" width="0.600" height="26" fill="#24558c" opacity=".55"/><rect x="567.8" y="22.5" width="0.600" height="26" fill="#24558c" opacity=".55"/><rect x="571.0" y="22.5" width="0.600" height="26" fill="#24558c" opacity=".55"/><rect x="574.2" y="22.5" width="0.600" height="26" fill="#24558c" opacity=".55"/><rect x="577.4" y="22.5" width="0.600" height="26" fill="#24558c" opacity=".55"/><rect x="580.6" y="22.5" width="0.600" height="26" fill="#24558c" opacity=".55"/><rect x="583.8" y="22.5" width="0.600" height="26" fill="#24558c" opacity=".55"/><rect x="587.0" y="22.5" width="0.600" height="26" fill="#24558c" opacity=".55"/><rect x="590.2" y="22.5" width="0.600" height="26" fill="#24558c" opacity=".55"/><rect x="593.4" y="22.5" width="0.600" height="26" fill="#24558c" opacity=".55"/><rect x="596.6" y="22.5" width="0.600" height="26" fill="#24558c" opacity=".55"/><rect x="599.8" y="22.5" width="0.600" height="26" fill="#24558c" opacity=".55"/><rect x="603.0" y="22.5" width="0.600" height="26" fill="#24558c" opacity=".55"/></g><rect x="4" y="35.7" width="600" height="1" fill="#3b78b2" opacity=".8"/><rect x="4" y="36.7" width="600" height="12" fill="#3272ad" opacity=".35"/><rect x="51.8" y="19.7" width="135.8" height="2" fill="#dd7a3e"/><rect x="238.3" y="19.7" width="182.0" height="2" fill="#dd7a3e"/><rect x="472.3" y="19.7" width="99.0" height="2" fill="#dd7a3e"/></g></svg>
<span id="t72" class="t" style="left:200px;top:902.40px;font-size:12px;line-height:14px;color:#f0f4fa;font-weight:400;letter-spacing:0.157px;-webkit-text-stroke:0.25px #f0f4fa;">Technology Future Electronic Dreamy Trap Beat</span>
<div style="position:absolute;left:193.5px;top:676px;width:2.6px;height:331.5px;background:#b4b4b7;border-radius:0px;"></div>
<div style="position:absolute;left:189.600px;top:664.200px;width:10.400px;height:14.600px;border:2px solid #f2f2f4;border-radius:3px 3px 5px 5px;box-sizing:border-box;background:#1c1c1d"></div>
<div style="position:absolute;left:144.3px;top:1013px;width:1886px;height:9px;background:#323236;border-radius:3.5px;"></div>
</div>
<svg style="position:absolute;left:980.500px;top:80.500px" width="468" height="467.300" viewBox="0 0 468 468" preserveAspectRatio="none"><use href="#mp3"/></svg>
<div style="position:absolute;left:992px;top:92.500px;width:19px;height:14.500px;border:1px solid rgba(235,245,238,.3);border-radius:3px;box-sizing:border-box"></div>
<span id="t33" class="t" style="left:1001.5px;transform:translateX(-50%);top:94.80px;font-size:8px;line-height:10px;color:rgba(235,245,238,.35);font-weight:400;">AI</span>
<div style="position:absolute;left:1092.2px;top:944.2px;width:103.8px;height:80px;background:#1e212a;border-radius:3.5px;box-shadow:0 1px 12px rgba(0,0,0,.55);"></div>
<span id="t73" class="t" style="left:1144.2px;transform:translateX(-50%);top:966.00px;font-size:27.5px;line-height:33px;color:#f7f7f9;font-weight:350;letter-spacing:0.250px;font-family:'Liberation Sans','Noto Sans CJK SC',sans-serif;-webkit-text-stroke-width:0;">缩小</span>
</body></html>
